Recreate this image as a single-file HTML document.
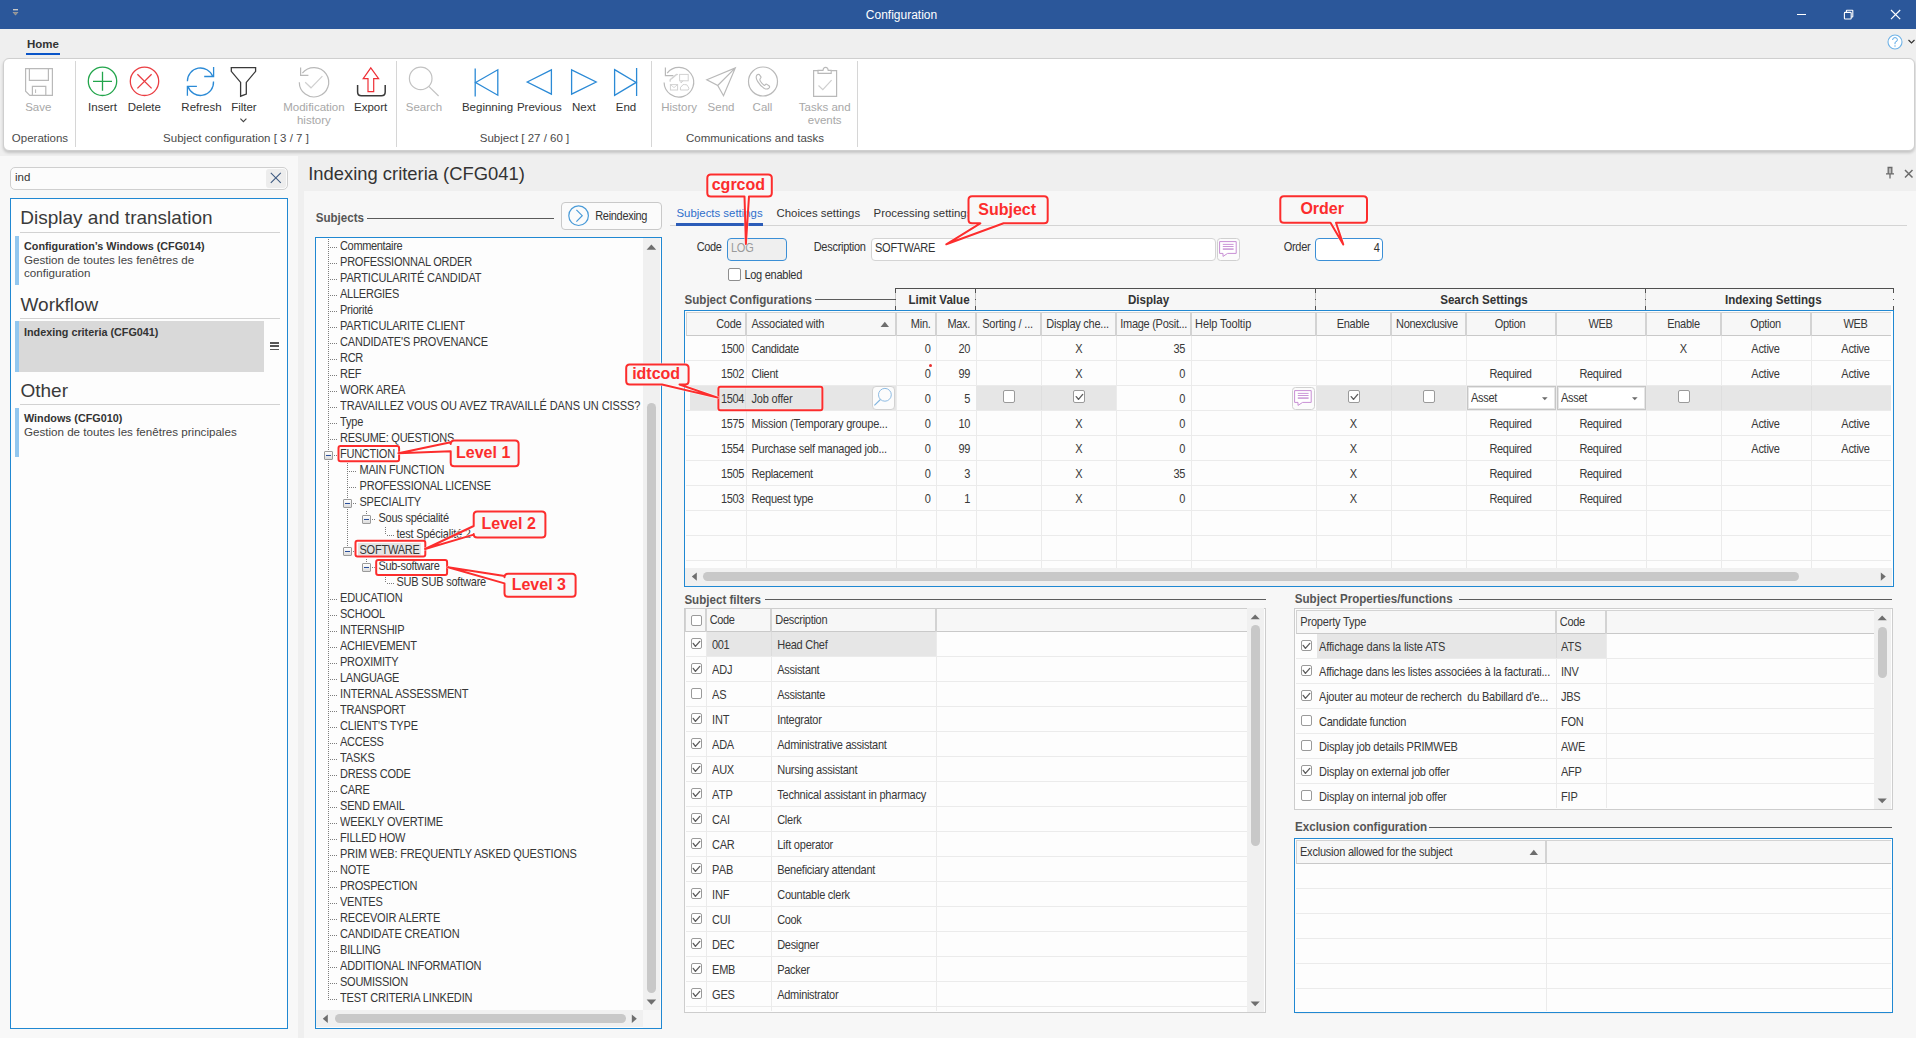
<!DOCTYPE html>
<html><head><meta charset="utf-8"><title>Configuration</title>
<style>
html,body{margin:0;padding:0;}
body{width:1916px;height:1038px;overflow:hidden;position:relative;background:#efefef;font-family:"Liberation Sans",sans-serif;}
.t{position:absolute;white-space:pre;}
.r{position:absolute;box-sizing:border-box;}
svg.r{overflow:visible;}
</style></head><body>
<div class="r" style="left:0px;top:0px;width:1916px;height:29px;background:#2b579a;"></div>
<div class="t" style="left:401.5px;width:1000px;text-align:center;top:8.54px;font-size:12px;line-height:12px;color:#ffffff;">Configuration</div>
<svg class="r" style="left:12px;top:8px;" width="8" height="10" viewBox="0 0 8 10"><rect x="1" y="1" width="5" height="1.4" fill="#c8c8c8"/><path d="M0.5 4 L6.5 4 L3.5 7.5 Z" fill="#a8a8a8"/><path d="M1.5 4.6 L5.5 4.6 L3.5 6.8 Z" fill="#8a8a8a"/></svg>
<div class="r" style="left:1797px;top:14px;width:9px;height:1px;background:#fff;"></div>
<svg class="r" style="left:1843px;top:9px;" width="12" height="12" viewBox="0 0 12 12"><rect x="1.4" y="3.4" width="6.8" height="6.6" rx="0.8" fill="none" stroke="#fff" stroke-width="1.1"/><path d="M3.4 3.4 V1.6 Q3.4 1.2 3.8 1.2 H9.4 Q9.8 1.2 9.8 1.6 V7.6 Q9.8 8 9.4 8 H8.2" fill="none" stroke="#fff" stroke-width="1.1"/></svg>
<svg class="r" style="left:1890px;top:9px;" width="12" height="12" viewBox="0 0 12 12"><path d="M1 1 L10.2 10.2 M10.2 1 L1 10.2" stroke="#fff" stroke-width="1.2"/></svg>
<div class="r" style="left:0px;top:29px;width:1916px;height:129px;background:#efefef;"></div>
<div class="t" style="left:27px;top:38.57px;font-size:11.5px;line-height:11.5px;color:#333;font-weight:600;">Home</div>
<div class="r" style="left:26px;top:53px;width:34px;height:2px;background:#0a55c8;"></div>
<svg class="r" style="left:1887px;top:34px;" width="16" height="16" viewBox="0 0 16 16"><circle cx="8" cy="8" r="7" fill="#fff" stroke="#6fb2e6" stroke-width="1.1"/><path d="M5.6 6 Q5.6 3.6 8 3.6 Q10.4 3.6 10.4 5.8 Q10.4 7.4 8 8.4 V10.2" fill="none" stroke="#5aa8e6" stroke-width="1"/><circle cx="8" cy="12" r="0.7" fill="#5aa8e6"/></svg>
<svg class="r" style="left:1908px;top:39px;" width="8" height="6" viewBox="0 0 8 6"><path d="M0.5 1 L3.5 4 L6.5 1" fill="none" stroke="#333" stroke-width="1.2"/></svg>
<div class="r" style="left:3px;top:58px;width:1912px;height:93px;background:#fff;border:1px solid #cfcfcf;border-radius:6px;box-sizing:border-box;box-shadow:0 2px 3px rgba(0,0,0,0.18);"></div>
<div class="t" style="left:-461.7px;width:1000px;text-align:center;top:101.87px;font-size:11.5px;line-height:11.5px;color:#a8a8a8;">Save</div>
<div class="t" style="left:-397.5px;width:1000px;text-align:center;top:101.87px;font-size:11.5px;line-height:11.5px;color:#333333;">Insert</div>
<div class="t" style="left:-355.7px;width:1000px;text-align:center;top:101.87px;font-size:11.5px;line-height:11.5px;color:#333333;">Delete</div>
<div class="t" style="left:-298.5px;width:1000px;text-align:center;top:101.87px;font-size:11.5px;line-height:11.5px;color:#333333;">Refresh</div>
<div class="t" style="left:-256.1px;width:1000px;text-align:center;top:101.87px;font-size:11.5px;line-height:11.5px;color:#333333;">Filter</div>
<div class="t" style="left:-186.10000000000002px;width:1000px;text-align:center;top:101.87px;font-size:11.5px;line-height:11.5px;color:#a8a8a8;">Modification</div>
<div class="t" style="left:-129.39999999999998px;width:1000px;text-align:center;top:101.87px;font-size:11.5px;line-height:11.5px;color:#333333;">Export</div>
<div class="t" style="left:-76px;width:1000px;text-align:center;top:101.87px;font-size:11.5px;line-height:11.5px;color:#a8a8a8;">Search</div>
<div class="t" style="left:-12.5px;width:1000px;text-align:center;top:101.87px;font-size:11.5px;line-height:11.5px;color:#333333;">Beginning</div>
<div class="t" style="left:39.299999999999955px;width:1000px;text-align:center;top:101.87px;font-size:11.5px;line-height:11.5px;color:#333333;">Previous</div>
<div class="t" style="left:83.79999999999995px;width:1000px;text-align:center;top:101.87px;font-size:11.5px;line-height:11.5px;color:#333333;">Next</div>
<div class="t" style="left:126px;width:1000px;text-align:center;top:101.87px;font-size:11.5px;line-height:11.5px;color:#333333;">End</div>
<div class="t" style="left:179.10000000000002px;width:1000px;text-align:center;top:101.87px;font-size:11.5px;line-height:11.5px;color:#a8a8a8;">History</div>
<div class="t" style="left:221px;width:1000px;text-align:center;top:101.87px;font-size:11.5px;line-height:11.5px;color:#a8a8a8;">Send</div>
<div class="t" style="left:262.5px;width:1000px;text-align:center;top:101.87px;font-size:11.5px;line-height:11.5px;color:#a8a8a8;">Call</div>
<div class="t" style="left:324.70000000000005px;width:1000px;text-align:center;top:101.87px;font-size:11.5px;line-height:11.5px;color:#a8a8a8;">Tasks and</div>
<div class="t" style="left:-186.10000000000002px;width:1000px;text-align:center;top:114.77px;font-size:11.5px;line-height:11.5px;color:#a8a8a8;">history</div>
<div class="t" style="left:324.70000000000005px;width:1000px;text-align:center;top:114.77px;font-size:11.5px;line-height:11.5px;color:#a8a8a8;">events</div>
<div class="t" style="left:-460px;width:1000px;text-align:center;top:133.07px;font-size:11.5px;line-height:11.5px;color:#4a4a4a;">Operations</div>
<div class="t" style="left:-264px;width:1000px;text-align:center;top:133.07px;font-size:11.5px;line-height:11.5px;color:#4a4a4a;">Subject configuration [ 3 / 7 ]</div>
<div class="t" style="left:24.5px;width:1000px;text-align:center;top:133.07px;font-size:11.5px;line-height:11.5px;color:#4a4a4a;">Subject [ 27 / 60 ]</div>
<div class="t" style="left:255px;width:1000px;text-align:center;top:133.07px;font-size:11.5px;line-height:11.5px;color:#4a4a4a;">Communications and tasks</div>
<div class="r" style="left:75px;top:61px;width:1px;height:86px;background:#d6d6d6;"></div>
<div class="r" style="left:396px;top:61px;width:1px;height:86px;background:#d6d6d6;"></div>
<div class="r" style="left:651px;top:61px;width:1px;height:86px;background:#d6d6d6;"></div>
<div class="r" style="left:857px;top:61px;width:1px;height:86px;background:#d6d6d6;"></div>
<svg class="r" style="left:0px;top:0px;pointer-events:none;" width="900" height="160" viewBox="0 0 900 160"><path d="M25.6 68.6 H52.4 V95.4 H29.8 L25.6 91.2 Z" fill="none" stroke="#b9b9b9" stroke-width="1.2"/><path d="M29.4 68.6 V80.4 H48.4 V68.6" fill="none" stroke="#b9b9b9" stroke-width="1.2"/><path d="M32.4 95.4 V86.4 H45.8 V95.4" fill="none" stroke="#b9b9b9" stroke-width="1.2"/><path d="M35.6 89.4 V93" stroke="#b9b9b9" stroke-width="1"/><circle cx="102.5" cy="81.3" r="14.2" fill="none" stroke="#22a54b" stroke-width="1.3"/><path d="M93 81.3 H112 M102.5 71.8 V90.8" stroke="#22a54b" stroke-width="1.3"/><circle cx="144.5" cy="81.3" r="14.2" fill="none" stroke="#ea3d42" stroke-width="1.3"/><path d="M137.4 74.2 L151.6 88.4 M151.6 74.2 L137.4 88.4" stroke="#ea3d42" stroke-width="1.3"/><path d="M187.4 81.3 A13.1 13.1 0 0 1 212.8 76.6" fill="none" stroke="#2b8ad6" stroke-width="1.3"/><path d="M213.6 67.1 V76.5 H204.2" fill="none" stroke="#2b8ad6" stroke-width="1.3"/><path d="M213.5 81.5 A13.1 13.1 0 0 1 188 86.5" fill="none" stroke="#2b8ad6" stroke-width="1.3"/><path d="M187.4 95.7 V86.4 H196.9" fill="none" stroke="#2b8ad6" stroke-width="1.3"/><path d="M231.3 67.6 H255.6 V71.3 L246.3 82.4 V94 L240.6 96.2 V82.4 L231.3 71.3 Z" fill="none" stroke="#3a3a3a" stroke-width="1.3" stroke-linejoin="miter"/><path d="M240.4 118.6 L243.4 121.6 L246.4 118.6" fill="none" stroke="#444" stroke-width="1.1"/><path d="M299.3 82.2 A14.7 14.7 0 1 0 302.4 73.2" fill="none" stroke="#b9b9b9" stroke-width="1.2"/><path d="M300.6 67.6 V75.4 H308.4" fill="none" stroke="#b9b9b9" stroke-width="1.2"/><path d="M305.2 82.2 L311 87.8 L322.4 76.2" fill="none" stroke="#cfcfcf" stroke-width="1.2"/><path d="M370.8 67.9 L378.6 78.7 H373.7 V91.6 H368 V78.7 H363.2 Z" fill="none" stroke="#ee2f36" stroke-width="1.2" stroke-linejoin="miter"/><path d="M357.6 85 V92 Q357.6 95.8 361.4 95.8 H381.4 Q385.2 95.8 385.2 92 V85" fill="none" stroke="#3a3a3a" stroke-width="1.5"/><circle cx="420.7" cy="78.4" r="11.3" fill="none" stroke="#c2c2c2" stroke-width="1.2"/><path d="M428.8 86.4 L438.6 96" stroke="#c2c2c2" stroke-width="1.2"/><path d="M475.2 68.6 V96.4" stroke="#2b8ad6" stroke-width="1.3"/><path d="M475.6 82.5 L497.8 69.8 V95.2 Z" fill="none" stroke="#2b8ad6" stroke-width="1.3"/><path d="M527.2 82 L551.4 69.8 V94.2 Z" fill="none" stroke="#2b8ad6" stroke-width="1.3"/><path d="M571.6 69.8 L596.2 82 L571.6 94.2 Z" fill="none" stroke="#2b8ad6" stroke-width="1.3"/><path d="M614.6 69.6 L636.2 82.4 L614.6 95.4 Z" fill="none" stroke="#2b8ad6" stroke-width="1.3"/><path d="M636.6 68 V96" stroke="#2b8ad6" stroke-width="1.3"/><path d="M664.1 82.6 A14.8 14.8 0 1 0 667.2 73.2" fill="none" stroke="#b9b9b9" stroke-width="1.2"/><path d="M665.4 67.4 V75.6 H673.4" fill="none" stroke="#b9b9b9" stroke-width="1.2"/><rect x="679.6" y="74.4" width="8.6" height="6.4" fill="none" stroke="#d2d2d2" stroke-width="1"/><path d="M681 80.8 V83 L683 80.8" fill="none" stroke="#d2d2d2" stroke-width="1"/><path d="M670.4 81.6 Q669.4 79.6 671.6 78.6 L675.4 75.4 Q677 73.8 677.6 75" fill="none" stroke="#d2d2d2" stroke-width="1.4"/><rect x="670.4" y="84.6" width="7.2" height="5.4" fill="none" stroke="#d2d2d2" stroke-width="1"/><path d="M670.4 84.6 L674 87.6 L677.6 84.6" fill="none" stroke="#d2d2d2" stroke-width="0.9"/><path d="M680.4 90 H688.2 Q689.8 88.2 688 86.6 Q687.4 84 684.6 84.6 Q682.8 83.8 682 86 Q679.8 86.4 680.4 90 Z" fill="none" stroke="#d2d2d2" stroke-width="1"/><path d="M706.8 79.7 L735.3 67.9 L723.5 95.7 L717.7 85.5 Z M717.7 85.5 L735.3 67.9" fill="none" stroke="#b9b9b9" stroke-width="1.2" stroke-linejoin="miter"/><circle cx="763" cy="81.5" r="14.5" fill="none" stroke="#b9b9b9" stroke-width="1.2"/><path d="M756.6 75.4 Q755.4 77.6 757.6 81.4 Q760.6 86.4 764.4 88.4 Q767 89.6 768.8 88.2 Q770.2 87 769.2 86 L767 84.4 Q766 83.8 765.2 84.8 L764.6 85.4 Q762.4 84.4 760.4 81.2 Q759.4 79.2 760.4 78.4 Q761.4 77.6 760.8 76.6 L759.4 74.6 Q758 73.8 756.6 75.4 Z" fill="none" stroke="#b9b9b9" stroke-width="1.1"/><path d="M818 70.6 H813.6 V96.4 H836.6 V70.6 H831.2" fill="none" stroke="#b9b9b9" stroke-width="1.2"/><path d="M818 70.4 V73.4 H831.2 V70.4 H828.2 Q828 67.4 825.6 67.4 Q823.2 67.4 823 70.4 Z" fill="none" stroke="#b9b9b9" stroke-width="1.1"/><path d="M818.5 85.5 L822.8 89.6 L831.6 80.1" fill="none" stroke="#cfcfcf" stroke-width="1.2"/></svg>
<div class="r" style="left:0px;top:156px;width:298px;height:882px;background:#f8f8f8;"></div>
<div class="r" style="left:10px;top:167px;width:278px;height:23px;background:#fcfcfc;border:1px solid #cfcfcf;border-radius:5px;"></div>
<div class="t" style="left:15px;top:171.97px;font-size:11.5px;line-height:11.5px;color:#333;">ind</div>
<div class="r" style="left:266px;top:169px;width:20px;height:19px;background:#ededed;border-radius:3px;"></div>
<svg class="r" style="left:270px;top:172px;" width="12" height="12" viewBox="0 0 12 12"><path d="M0.8 0.8 L10.8 10.8 M10.8 0.8 L0.8 10.8" stroke="#3f5b82" stroke-width="1.1"/></svg>
<div class="r" style="left:10px;top:198px;width:278px;height:831px;background:#fdfdfd;border:1px solid #2088d2;"></div>
<div class="t" style="left:20.3px;top:208.42px;font-size:19px;line-height:19px;color:#3a3a3a;">Display and translation</div>
<div class="r" style="left:20px;top:232px;width:260px;height:1px;background:#d2d2d2;"></div>
<div class="r" style="left:15px;top:236px;width:4px;height:49px;background:#93c7ef;"></div>
<div class="t" style="left:24px;top:241.36px;font-size:10.8px;line-height:10.8px;color:#333;font-weight:700;">Configuration’s Windows (CFG014)</div>
<div class="t" style="left:24px;top:254.08px;font-size:11.6px;line-height:11.6px;color:#444;">Gestion de toutes les fenêtres de</div>
<div class="t" style="left:24px;top:266.88px;font-size:11.6px;line-height:11.6px;color:#444;">configuration</div>
<div class="t" style="left:20.5px;top:294.52px;font-size:19px;line-height:19px;color:#3a3a3a;">Workflow</div>
<div class="r" style="left:20px;top:318px;width:260px;height:1px;background:#d2d2d2;"></div>
<div class="r" style="left:15px;top:321px;width:249px;height:51px;background:#d9d9d9;"></div>
<div class="r" style="left:15px;top:321px;width:4px;height:51px;background:#93c7ef;"></div>
<div class="t" style="left:24px;top:327.46px;font-size:10.8px;line-height:10.8px;color:#333;font-weight:700;">Indexing criteria (CFG041)</div>
<div class="r" style="left:270px;top:342px;width:9px;height:1.6px;background:#555;"></div>
<div class="r" style="left:270px;top:345.4px;width:9px;height:1.6px;background:#555;"></div>
<div class="r" style="left:270px;top:348.8px;width:9px;height:1.6px;background:#555;"></div>
<div class="t" style="left:20.5px;top:380.52px;font-size:19px;line-height:19px;color:#3a3a3a;">Other</div>
<div class="r" style="left:20px;top:404px;width:260px;height:1px;background:#d2d2d2;"></div>
<div class="r" style="left:15px;top:408px;width:4px;height:49px;background:#93c7ef;"></div>
<div class="t" style="left:24px;top:413.46px;font-size:10.8px;line-height:10.8px;color:#333;font-weight:700;">Windows (CFG010)</div>
<div class="t" style="left:24px;top:425.78px;font-size:11.6px;line-height:11.6px;color:#444;">Gestion de toutes les fenêtres principales</div>
<div class="t" style="left:308.2px;top:164.72px;font-size:18.4px;line-height:18.4px;color:#333;">Indexing criteria (CFG041)</div>
<svg class="r" style="left:1884px;top:166px;" width="12" height="14" viewBox="0 0 12 14"><path d="M3.5 1.5 H8.5 M4.2 1.5 V7.5 M7.8 1.5 V7.5 M2 7.8 H10 M6 7.8 V12.5" stroke="#6b6b6b" stroke-width="1.3" fill="none"/><rect x="4.2" y="1.5" width="3.6" height="6.3" fill="#6b6b6b" opacity="0.4"/></svg>
<svg class="r" style="left:1904px;top:169px;" width="10" height="10" viewBox="0 0 10 10"><path d="M1 1 L8.5 8.5 M8.5 1 L1 8.5" stroke="#6b6b6b" stroke-width="1.5"/></svg>
<div class="r" style="left:304px;top:191px;width:1612px;height:847px;background:#f7f7f7;"></div>
<div class="t" style="left:315.7px;top:212.18px;font-size:11.6px;line-height:11.6px;color:#555;font-weight:700;transform:scaleY(1.125);transform-origin:0 9.82px;">Subjects</div>
<div class="r" style="left:367px;top:218px;width:187px;height:1px;background:#5a5a5a;"></div>
<div class="r" style="left:561px;top:202px;width:101px;height:28px;background:#fbfbfb;border:1px solid #c9c9c9;border-radius:4px;"></div>
<svg class="r" style="left:567px;top:204px;" width="24" height="24" viewBox="0 0 24 24"><circle cx="11.6" cy="11.7" r="9.8" fill="none" stroke="#4a9bd8" stroke-width="1.2"/><path d="M9.4 5.8 L15.2 11.7 L9.4 17.6" fill="none" stroke="#4a9bd8" stroke-width="1.2"/></svg>
<div class="t" style="left:595.2px;top:210.99px;font-size:11px;line-height:11px;color:#333;letter-spacing:-0.306px;transform:scaleY(1.125);transform-origin:0 9.31px;">Reindexing</div>
<div class="r" style="left:315px;top:237px;width:347px;height:792px;background:#fdfdfd;border:1px solid #2088d2;"></div>
<div class="r" style="left:643px;top:238px;width:17px;height:772px;background:#f0f0f0;"></div>
<svg class="r" style="left:646px;top:244px;" width="11" height="7" viewBox="0 0 11 7"><path d="M0.6 5.8 L5.4 0.6 L10.2 5.8 Z" fill="#6e6e6e"/></svg>
<div class="r" style="left:647px;top:403px;width:9px;height:590px;background:#c8c8c8;border-radius:4.5px;"></div>
<svg class="r" style="left:646px;top:999px;" width="11" height="7" viewBox="0 0 11 7"><path d="M0.6 0.6 L5.4 5.8 L10.2 0.6 Z" fill="#6e6e6e"/></svg>
<div class="r" style="left:316px;top:1010px;width:327px;height:17px;background:#f0f0f0;"></div>
<div class="r" style="left:643px;top:1010px;width:18px;height:18px;background:#f7f7f7;"></div>
<svg class="r" style="left:322px;top:1014px;" width="7" height="10" viewBox="0 0 7 10"><path d="M5.8 0.4 L0.8 4.7 L5.8 9 Z" fill="#6e6e6e"/></svg>
<div class="r" style="left:335px;top:1014px;width:291px;height:9px;background:#c8c8c8;border-radius:4.5px;"></div>
<svg class="r" style="left:631px;top:1014px;" width="7" height="10" viewBox="0 0 7 10"><path d="M0.8 0.4 L5.8 4.7 L0.8 9 Z" fill="#6e6e6e"/></svg>
<div class="r" style="left:328px;top:239px;width:1px;height:761px;background:repeating-linear-gradient(to bottom,#7c7c7c 0 1px,transparent 1px 2px);"></div>
<div class="r" style="left:347px;top:461px;width:1px;height:86px;background:repeating-linear-gradient(to bottom,#7c7c7c 0 1px,transparent 1px 2px);"></div>
<div class="r" style="left:330px;top:247px;width:8px;height:1px;background:repeating-linear-gradient(to right,#7c7c7c 0 1px,transparent 1px 2px);"></div>
<div class="t" style="left:340px;top:241.19px;font-size:11px;line-height:11px;color:#363636;letter-spacing:-0.337px;transform:scaleY(1.125);transform-origin:0 9.31px;">Commentaire</div>
<div class="r" style="left:330px;top:263px;width:8px;height:1px;background:repeating-linear-gradient(to right,#7c7c7c 0 1px,transparent 1px 2px);"></div>
<div class="t" style="left:340px;top:257.19px;font-size:11px;line-height:11px;color:#363636;letter-spacing:-0.208px;transform:scaleY(1.125);transform-origin:0 9.31px;">PROFESSIONNAL ORDER</div>
<div class="r" style="left:330px;top:279px;width:8px;height:1px;background:repeating-linear-gradient(to right,#7c7c7c 0 1px,transparent 1px 2px);"></div>
<div class="t" style="left:340px;top:273.19px;font-size:11px;line-height:11px;color:#363636;letter-spacing:-0.13px;transform:scaleY(1.125);transform-origin:0 9.31px;">PARTICULARITÉ CANDIDAT</div>
<div class="r" style="left:330px;top:295px;width:8px;height:1px;background:repeating-linear-gradient(to right,#7c7c7c 0 1px,transparent 1px 2px);"></div>
<div class="t" style="left:340px;top:289.19px;font-size:11px;line-height:11px;color:#363636;letter-spacing:-0.238px;transform:scaleY(1.125);transform-origin:0 9.31px;">ALLERGIES</div>
<div class="r" style="left:330px;top:311px;width:8px;height:1px;background:repeating-linear-gradient(to right,#7c7c7c 0 1px,transparent 1px 2px);"></div>
<div class="t" style="left:340px;top:305.19px;font-size:11px;line-height:11px;color:#363636;letter-spacing:-0.235px;transform:scaleY(1.125);transform-origin:0 9.31px;">Priorité</div>
<div class="r" style="left:330px;top:327px;width:8px;height:1px;background:repeating-linear-gradient(to right,#7c7c7c 0 1px,transparent 1px 2px);"></div>
<div class="t" style="left:340px;top:321.19px;font-size:11px;line-height:11px;color:#363636;letter-spacing:-0.154px;transform:scaleY(1.125);transform-origin:0 9.31px;">PARTICULARITE CLIENT</div>
<div class="r" style="left:330px;top:343px;width:8px;height:1px;background:repeating-linear-gradient(to right,#7c7c7c 0 1px,transparent 1px 2px);"></div>
<div class="t" style="left:340px;top:337.19px;font-size:11px;line-height:11px;color:#363636;letter-spacing:-0.194px;transform:scaleY(1.125);transform-origin:0 9.31px;">CANDIDATE'S PROVENANCE</div>
<div class="r" style="left:330px;top:359px;width:8px;height:1px;background:repeating-linear-gradient(to right,#7c7c7c 0 1px,transparent 1px 2px);"></div>
<div class="t" style="left:340px;top:353.19px;font-size:11px;line-height:11px;color:#363636;letter-spacing:-0.278px;transform:scaleY(1.125);transform-origin:0 9.31px;">RCR</div>
<div class="r" style="left:330px;top:375px;width:8px;height:1px;background:repeating-linear-gradient(to right,#7c7c7c 0 1px,transparent 1px 2px);"></div>
<div class="t" style="left:340px;top:369.19px;font-size:11px;line-height:11px;color:#363636;letter-spacing:-0.257px;transform:scaleY(1.125);transform-origin:0 9.31px;">REF</div>
<div class="r" style="left:330px;top:391px;width:8px;height:1px;background:repeating-linear-gradient(to right,#7c7c7c 0 1px,transparent 1px 2px);"></div>
<div class="t" style="left:340px;top:385.19px;font-size:11px;line-height:11px;color:#363636;letter-spacing:-0.148px;transform:scaleY(1.125);transform-origin:0 9.31px;">WORK AREA</div>
<div class="r" style="left:330px;top:407px;width:8px;height:1px;background:repeating-linear-gradient(to right,#7c7c7c 0 1px,transparent 1px 2px);"></div>
<div class="t" style="left:340px;top:401.19px;font-size:11px;line-height:11px;color:#363636;letter-spacing:-0.071px;transform:scaleY(1.125);transform-origin:0 9.31px;">TRAVAILLEZ VOUS OU AVEZ TRAVAILLÉ DANS UN CISSS?</div>
<div class="r" style="left:330px;top:423px;width:8px;height:1px;background:repeating-linear-gradient(to right,#7c7c7c 0 1px,transparent 1px 2px);"></div>
<div class="t" style="left:340px;top:417.19px;font-size:11px;line-height:11px;color:#363636;letter-spacing:-0.169px;transform:scaleY(1.125);transform-origin:0 9.31px;">Type</div>
<div class="r" style="left:330px;top:439px;width:8px;height:1px;background:repeating-linear-gradient(to right,#7c7c7c 0 1px,transparent 1px 2px);"></div>
<div class="t" style="left:340px;top:433.19px;font-size:11px;line-height:11px;color:#363636;letter-spacing:-0.23px;transform:scaleY(1.125);transform-origin:0 9.31px;">RESUME: QUESTIONS</div>
<div class="r" style="left:324px;top:451px;width:9px;height:9px;border:1px solid #9a9a9a;border-radius:1px;background:linear-gradient(#ffffff,#dcdcdc);"></div>
<div class="r" style="left:326px;top:455px;width:5px;height:1px;background:#2a4f9a;"></div>
<div class="r" style="left:334px;top:455px;width:4px;height:1px;background:repeating-linear-gradient(to right,#7c7c7c 0 1px,transparent 1px 2px);"></div>
<div class="t" style="left:340px;top:449.19px;font-size:11px;line-height:11px;color:#363636;letter-spacing:-0.249px;transform:scaleY(1.125);transform-origin:0 9.31px;">FUNCTION</div>
<div class="r" style="left:349px;top:471px;width:8px;height:1px;background:repeating-linear-gradient(to right,#7c7c7c 0 1px,transparent 1px 2px);"></div>
<div class="t" style="left:359.5px;top:465.19px;font-size:11px;line-height:11px;color:#363636;letter-spacing:-0.204px;transform:scaleY(1.125);transform-origin:0 9.31px;">MAIN FUNCTION</div>
<div class="r" style="left:349px;top:487px;width:8px;height:1px;background:repeating-linear-gradient(to right,#7c7c7c 0 1px,transparent 1px 2px);"></div>
<div class="t" style="left:359.5px;top:481.19px;font-size:11px;line-height:11px;color:#363636;letter-spacing:-0.196px;transform:scaleY(1.125);transform-origin:0 9.31px;">PROFESSIONAL LICENSE</div>
<div class="r" style="left:343px;top:499px;width:9px;height:9px;border:1px solid #9a9a9a;border-radius:1px;background:linear-gradient(#ffffff,#dcdcdc);"></div>
<div class="r" style="left:345px;top:503px;width:5px;height:1px;background:#2a4f9a;"></div>
<div class="r" style="left:353px;top:503px;width:4px;height:1px;background:repeating-linear-gradient(to right,#7c7c7c 0 1px,transparent 1px 2px);"></div>
<div class="t" style="left:359.5px;top:497.19px;font-size:11px;line-height:11px;color:#363636;letter-spacing:-0.223px;transform:scaleY(1.125);transform-origin:0 9.31px;">SPECIALITY</div>
<div class="r" style="left:366px;top:511px;width:1px;height:4px;background:repeating-linear-gradient(to bottom,#7c7c7c 0 1px,transparent 1px 2px);"></div>
<div class="r" style="left:362px;top:515px;width:9px;height:9px;border:1px solid #9a9a9a;border-radius:1px;background:linear-gradient(#ffffff,#dcdcdc);"></div>
<div class="r" style="left:364px;top:519px;width:5px;height:1px;background:#2a4f9a;"></div>
<div class="r" style="left:372px;top:519px;width:4px;height:1px;background:repeating-linear-gradient(to right,#7c7c7c 0 1px,transparent 1px 2px);"></div>
<div class="t" style="left:378.5px;top:513.19px;font-size:11px;line-height:11px;color:#363636;letter-spacing:-0.247px;transform:scaleY(1.125);transform-origin:0 9.31px;">Sous spécialité</div>
<div class="r" style="left:385px;top:527px;width:1px;height:8px;background:repeating-linear-gradient(to bottom,#7c7c7c 0 1px,transparent 1px 2px);"></div>
<div class="r" style="left:387px;top:535px;width:7px;height:1px;background:repeating-linear-gradient(to right,#7c7c7c 0 1px,transparent 1px 2px);"></div>
<div class="t" style="left:396.5px;top:529.19px;font-size:11px;line-height:11px;color:#363636;letter-spacing:-0.202px;transform:scaleY(1.125);transform-origin:0 9.31px;">test Spécialité 2</div>
<div class="r" style="left:343px;top:547px;width:9px;height:9px;border:1px solid #9a9a9a;border-radius:1px;background:linear-gradient(#ffffff,#dcdcdc);"></div>
<div class="r" style="left:345px;top:551px;width:5px;height:1px;background:#2a4f9a;"></div>
<div class="r" style="left:353px;top:551px;width:4px;height:1px;background:repeating-linear-gradient(to right,#7c7c7c 0 1px,transparent 1px 2px);"></div>
<div class="r" style="left:358px;top:543px;width:63px;height:13px;background:#e4e4e4;"></div>
<div class="t" style="left:359.5px;top:545.19px;font-size:11px;line-height:11px;color:#363636;letter-spacing:-0.222px;transform:scaleY(1.125);transform-origin:0 9.31px;">SOFTWARE</div>
<div class="r" style="left:366px;top:559px;width:1px;height:4px;background:repeating-linear-gradient(to bottom,#7c7c7c 0 1px,transparent 1px 2px);"></div>
<div class="r" style="left:362px;top:563px;width:9px;height:9px;border:1px solid #9a9a9a;border-radius:1px;background:linear-gradient(#ffffff,#dcdcdc);"></div>
<div class="r" style="left:364px;top:567px;width:5px;height:1px;background:#2a4f9a;"></div>
<div class="r" style="left:372px;top:567px;width:4px;height:1px;background:repeating-linear-gradient(to right,#7c7c7c 0 1px,transparent 1px 2px);"></div>
<div class="t" style="left:378.5px;top:561.19px;font-size:11px;line-height:11px;color:#363636;letter-spacing:-0.316px;transform:scaleY(1.125);transform-origin:0 9.31px;">Sub-software</div>
<div class="r" style="left:385px;top:575px;width:1px;height:8px;background:repeating-linear-gradient(to bottom,#7c7c7c 0 1px,transparent 1px 2px);"></div>
<div class="r" style="left:387px;top:583px;width:7px;height:1px;background:repeating-linear-gradient(to right,#7c7c7c 0 1px,transparent 1px 2px);"></div>
<div class="t" style="left:396.5px;top:577.19px;font-size:11px;line-height:11px;color:#363636;letter-spacing:-0.214px;transform:scaleY(1.125);transform-origin:0 9.31px;">SUB SUB software</div>
<div class="r" style="left:330px;top:599px;width:8px;height:1px;background:repeating-linear-gradient(to right,#7c7c7c 0 1px,transparent 1px 2px);"></div>
<div class="t" style="left:340px;top:593.19px;font-size:11px;line-height:11px;color:#363636;letter-spacing:-0.161px;transform:scaleY(1.125);transform-origin:0 9.31px;">EDUCATION</div>
<div class="r" style="left:330px;top:615px;width:8px;height:1px;background:repeating-linear-gradient(to right,#7c7c7c 0 1px,transparent 1px 2px);"></div>
<div class="t" style="left:340px;top:609.19px;font-size:11px;line-height:11px;color:#363636;letter-spacing:-0.271px;transform:scaleY(1.125);transform-origin:0 9.31px;">SCHOOL</div>
<div class="r" style="left:330px;top:631px;width:8px;height:1px;background:repeating-linear-gradient(to right,#7c7c7c 0 1px,transparent 1px 2px);"></div>
<div class="t" style="left:340px;top:625.19px;font-size:11px;line-height:11px;color:#363636;letter-spacing:-0.233px;transform:scaleY(1.125);transform-origin:0 9.31px;">INTERNSHIP</div>
<div class="r" style="left:330px;top:647px;width:8px;height:1px;background:repeating-linear-gradient(to right,#7c7c7c 0 1px,transparent 1px 2px);"></div>
<div class="t" style="left:340px;top:641.19px;font-size:11px;line-height:11px;color:#363636;letter-spacing:-0.253px;transform:scaleY(1.125);transform-origin:0 9.31px;">ACHIEVEMENT</div>
<div class="r" style="left:330px;top:663px;width:8px;height:1px;background:repeating-linear-gradient(to right,#7c7c7c 0 1px,transparent 1px 2px);"></div>
<div class="t" style="left:340px;top:657.19px;font-size:11px;line-height:11px;color:#363636;letter-spacing:-0.235px;transform:scaleY(1.125);transform-origin:0 9.31px;">PROXIMITY</div>
<div class="r" style="left:330px;top:679px;width:8px;height:1px;background:repeating-linear-gradient(to right,#7c7c7c 0 1px,transparent 1px 2px);"></div>
<div class="t" style="left:340px;top:673.19px;font-size:11px;line-height:11px;color:#363636;letter-spacing:-0.267px;transform:scaleY(1.125);transform-origin:0 9.31px;">LANGUAGE</div>
<div class="r" style="left:330px;top:695px;width:8px;height:1px;background:repeating-linear-gradient(to right,#7c7c7c 0 1px,transparent 1px 2px);"></div>
<div class="t" style="left:340px;top:689.19px;font-size:11px;line-height:11px;color:#363636;letter-spacing:-0.169px;transform:scaleY(1.125);transform-origin:0 9.31px;">INTERNAL ASSESSMENT</div>
<div class="r" style="left:330px;top:711px;width:8px;height:1px;background:repeating-linear-gradient(to right,#7c7c7c 0 1px,transparent 1px 2px);"></div>
<div class="t" style="left:340px;top:705.19px;font-size:11px;line-height:11px;color:#363636;letter-spacing:-0.242px;transform:scaleY(1.125);transform-origin:0 9.31px;">TRANSPORT</div>
<div class="r" style="left:330px;top:727px;width:8px;height:1px;background:repeating-linear-gradient(to right,#7c7c7c 0 1px,transparent 1px 2px);"></div>
<div class="t" style="left:340px;top:721.19px;font-size:11px;line-height:11px;color:#363636;letter-spacing:-0.18px;transform:scaleY(1.125);transform-origin:0 9.31px;">CLIENT'S TYPE</div>
<div class="r" style="left:330px;top:743px;width:8px;height:1px;background:repeating-linear-gradient(to right,#7c7c7c 0 1px,transparent 1px 2px);"></div>
<div class="t" style="left:340px;top:737.19px;font-size:11px;line-height:11px;color:#363636;letter-spacing:-0.264px;transform:scaleY(1.125);transform-origin:0 9.31px;">ACCESS</div>
<div class="r" style="left:330px;top:759px;width:8px;height:1px;background:repeating-linear-gradient(to right,#7c7c7c 0 1px,transparent 1px 2px);"></div>
<div class="t" style="left:340px;top:753.19px;font-size:11px;line-height:11px;color:#363636;letter-spacing:-0.089px;transform:scaleY(1.125);transform-origin:0 9.31px;">TASKS</div>
<div class="r" style="left:330px;top:775px;width:8px;height:1px;background:repeating-linear-gradient(to right,#7c7c7c 0 1px,transparent 1px 2px);"></div>
<div class="t" style="left:340px;top:769.19px;font-size:11px;line-height:11px;color:#363636;letter-spacing:-0.213px;transform:scaleY(1.125);transform-origin:0 9.31px;">DRESS CODE</div>
<div class="r" style="left:330px;top:791px;width:8px;height:1px;background:repeating-linear-gradient(to right,#7c7c7c 0 1px,transparent 1px 2px);"></div>
<div class="t" style="left:340px;top:785.19px;font-size:11px;line-height:11px;color:#363636;letter-spacing:-0.267px;transform:scaleY(1.125);transform-origin:0 9.31px;">CARE</div>
<div class="r" style="left:330px;top:807px;width:8px;height:1px;background:repeating-linear-gradient(to right,#7c7c7c 0 1px,transparent 1px 2px);"></div>
<div class="t" style="left:340px;top:801.19px;font-size:11px;line-height:11px;color:#363636;letter-spacing:-0.192px;transform:scaleY(1.125);transform-origin:0 9.31px;">SEND EMAIL</div>
<div class="r" style="left:330px;top:823px;width:8px;height:1px;background:repeating-linear-gradient(to right,#7c7c7c 0 1px,transparent 1px 2px);"></div>
<div class="t" style="left:340px;top:817.19px;font-size:11px;line-height:11px;color:#363636;letter-spacing:-0.14px;transform:scaleY(1.125);transform-origin:0 9.31px;">WEEKLY OVERTIME</div>
<div class="r" style="left:330px;top:839px;width:8px;height:1px;background:repeating-linear-gradient(to right,#7c7c7c 0 1px,transparent 1px 2px);"></div>
<div class="t" style="left:340px;top:833.19px;font-size:11px;line-height:11px;color:#363636;letter-spacing:-0.194px;transform:scaleY(1.125);transform-origin:0 9.31px;">FILLED HOW</div>
<div class="r" style="left:330px;top:855px;width:8px;height:1px;background:repeating-linear-gradient(to right,#7c7c7c 0 1px,transparent 1px 2px);"></div>
<div class="t" style="left:340px;top:849.19px;font-size:11px;line-height:11px;color:#363636;letter-spacing:-0.152px;transform:scaleY(1.125);transform-origin:0 9.31px;">PRIM WEB: FREQUENTLY ASKED QUESTIONS</div>
<div class="r" style="left:330px;top:871px;width:8px;height:1px;background:repeating-linear-gradient(to right,#7c7c7c 0 1px,transparent 1px 2px);"></div>
<div class="t" style="left:340px;top:865.19px;font-size:11px;line-height:11px;color:#363636;letter-spacing:-0.267px;transform:scaleY(1.125);transform-origin:0 9.31px;">NOTE</div>
<div class="r" style="left:330px;top:887px;width:8px;height:1px;background:repeating-linear-gradient(to right,#7c7c7c 0 1px,transparent 1px 2px);"></div>
<div class="t" style="left:340px;top:881.19px;font-size:11px;line-height:11px;color:#363636;letter-spacing:-0.255px;transform:scaleY(1.125);transform-origin:0 9.31px;">PROSPECTION</div>
<div class="r" style="left:330px;top:903px;width:8px;height:1px;background:repeating-linear-gradient(to right,#7c7c7c 0 1px,transparent 1px 2px);"></div>
<div class="t" style="left:340px;top:897.19px;font-size:11px;line-height:11px;color:#363636;letter-spacing:-0.257px;transform:scaleY(1.125);transform-origin:0 9.31px;">VENTES</div>
<div class="r" style="left:330px;top:919px;width:8px;height:1px;background:repeating-linear-gradient(to right,#7c7c7c 0 1px,transparent 1px 2px);"></div>
<div class="t" style="left:340px;top:913.19px;font-size:11px;line-height:11px;color:#363636;letter-spacing:-0.16px;transform:scaleY(1.125);transform-origin:0 9.31px;">RECEVOIR ALERTE</div>
<div class="r" style="left:330px;top:935px;width:8px;height:1px;background:repeating-linear-gradient(to right,#7c7c7c 0 1px,transparent 1px 2px);"></div>
<div class="t" style="left:340px;top:929.19px;font-size:11px;line-height:11px;color:#363636;letter-spacing:-0.126px;transform:scaleY(1.125);transform-origin:0 9.31px;">CANDIDATE CREATION</div>
<div class="r" style="left:330px;top:951px;width:8px;height:1px;background:repeating-linear-gradient(to right,#7c7c7c 0 1px,transparent 1px 2px);"></div>
<div class="t" style="left:340px;top:945.19px;font-size:11px;line-height:11px;color:#363636;letter-spacing:-0.211px;transform:scaleY(1.125);transform-origin:0 9.31px;">BILLING</div>
<div class="r" style="left:330px;top:967px;width:8px;height:1px;background:repeating-linear-gradient(to right,#7c7c7c 0 1px,transparent 1px 2px);"></div>
<div class="t" style="left:340px;top:961.19px;font-size:11px;line-height:11px;color:#363636;letter-spacing:-0.158px;transform:scaleY(1.125);transform-origin:0 9.31px;">ADDITIONAL INFORMATION</div>
<div class="r" style="left:330px;top:983px;width:8px;height:1px;background:repeating-linear-gradient(to right,#7c7c7c 0 1px,transparent 1px 2px);"></div>
<div class="t" style="left:340px;top:977.19px;font-size:11px;line-height:11px;color:#363636;letter-spacing:-0.246px;transform:scaleY(1.125);transform-origin:0 9.31px;">SOUMISSION</div>
<div class="r" style="left:330px;top:999px;width:8px;height:1px;background:repeating-linear-gradient(to right,#7c7c7c 0 1px,transparent 1px 2px);"></div>
<div class="t" style="left:340px;top:993.19px;font-size:11px;line-height:11px;color:#363636;letter-spacing:-0.143px;transform:scaleY(1.125);transform-origin:0 9.31px;">TEST CRITERIA LINKEDIN</div>
<div class="r" style="left:670px;top:225px;width:1237px;height:1px;background:#d4d4d4;"></div>
<div class="t" style="left:676.5px;top:208.15px;font-size:11.4px;line-height:11.4px;color:#2f6ecb;">Subjects settings</div>
<div class="r" style="left:676px;top:223px;width:87px;height:3px;background:#2b5cb8;"></div>
<div class="t" style="left:776.5px;top:208.15px;font-size:11.4px;line-height:11.4px;color:#333;">Choices settings</div>
<div class="t" style="left:873.6px;top:208.15px;font-size:11.4px;line-height:11.4px;color:#333;">Processing settings</div>
<div class="t" style="left:696.7px;top:242.49px;font-size:11px;line-height:11px;color:#333;letter-spacing:-0.34px;transform:scaleY(1.125);transform-origin:0 9.31px;">Code</div>
<div class="r" style="left:727px;top:238px;width:60px;height:23px;background:#efefef;border:1px solid #3b8fd6;border-radius:4px;"></div>
<div class="t" style="left:731px;top:242.89px;font-size:11px;line-height:11px;color:#9a9a9a;letter-spacing:-0.271px;transform:scaleY(1.125);transform-origin:0 9.31px;">LOG</div>
<div class="t" style="left:813.7px;top:242.49px;font-size:11px;line-height:11px;color:#333;letter-spacing:-0.278px;transform:scaleY(1.125);transform-origin:0 9.31px;">Description</div>
<div class="r" style="left:871px;top:238px;width:345px;height:23px;background:#fff;border:1px solid #d4d4d4;border-radius:4px;"></div>
<div class="t" style="left:875px;top:242.89px;font-size:11px;line-height:11px;color:#333;letter-spacing:-0.222px;transform:scaleY(1.125);transform-origin:0 9.31px;">SOFTWARE</div>
<div class="r" style="left:1217px;top:238px;width:23px;height:23px;background:#fcfcfc;border:1px solid #d0d0d0;border-radius:3.5px;"></div>
<svg class="r" style="left:1217px;top:238px;" width="23" height="23" viewBox="0 0 23 23"><path d="M2.6 3.6 H19.2 V15.4 H10.6 L6 18.4 L6 15.4 H2.6 Z" fill="#fff" stroke="#c88fd4" stroke-width="1"/><path d="M5.8 6.4 H16.6 M5.8 8.5 H16.6" stroke="#c58bd2" stroke-width="0.9"/><rect x="5.8" y="10.2" width="10.8" height="1.8" fill="#d2a8dc"/></svg>
<div class="t" style="left:1283.7px;top:242.39px;font-size:11px;line-height:11px;color:#333;letter-spacing:-0.291px;transform:scaleY(1.125);transform-origin:0 9.31px;">Order</div>
<div class="r" style="left:1315px;top:238px;width:68px;height:23px;background:#fff;border:1px solid #3b8fd6;border-radius:4px;"></div>
<div class="t" style="right:536.5px;top:242.89px;font-size:11px;line-height:11px;color:#333;letter-spacing:-0.367px;transform:scaleY(1.125);transform-origin:100% 9.31px;">4</div>
<div class="r" style="left:728px;top:268px;width:13px;height:13px;background:#fff;border:1px solid #8e8e8e;border-radius:2px;"></div>
<div class="t" style="left:744.4px;top:270.49px;font-size:11px;line-height:11px;color:#333;letter-spacing:-0.267px;transform:scaleY(1.125);transform-origin:0 9.31px;">Log enabled</div>
<div class="t" style="left:684.5px;top:293.88px;font-size:11.6px;line-height:11.6px;color:#555;font-weight:700;transform:scaleY(1.125);transform-origin:0 9.82px;">Subject Configurations</div>
<div class="r" style="left:815px;top:299px;width:80px;height:1px;background:#5c5c5c;"></div>
<div class="r" style="left:896px;top:289px;width:997px;height:21px;background:#f7f7f7;"></div>
<div class="r" style="left:895px;top:288px;width:999px;height:1px;background:#505050;"></div>
<div class="r" style="left:895px;top:289px;width:1px;height:21px;background:#c8c8c8;"></div>
<div class="r" style="left:895px;top:289px;width:1px;height:4px;background:#505050;"></div>
<div class="r" style="left:895px;top:306px;width:1px;height:4px;background:#505050;"></div>
<div class="r" style="left:895px;top:299px;width:1px;height:1px;background:#505050;"></div>
<div class="r" style="left:975px;top:289px;width:1px;height:21px;background:#c8c8c8;"></div>
<div class="r" style="left:975px;top:289px;width:1px;height:4px;background:#505050;"></div>
<div class="r" style="left:975px;top:306px;width:1px;height:4px;background:#505050;"></div>
<div class="r" style="left:975px;top:299px;width:1px;height:1px;background:#505050;"></div>
<div class="r" style="left:1315px;top:289px;width:1px;height:21px;background:#c8c8c8;"></div>
<div class="r" style="left:1315px;top:289px;width:1px;height:4px;background:#505050;"></div>
<div class="r" style="left:1315px;top:306px;width:1px;height:4px;background:#505050;"></div>
<div class="r" style="left:1315px;top:299px;width:1px;height:1px;background:#505050;"></div>
<div class="r" style="left:1645px;top:289px;width:1px;height:21px;background:#c8c8c8;"></div>
<div class="r" style="left:1645px;top:289px;width:1px;height:4px;background:#505050;"></div>
<div class="r" style="left:1645px;top:306px;width:1px;height:4px;background:#505050;"></div>
<div class="r" style="left:1645px;top:299px;width:1px;height:1px;background:#505050;"></div>
<div class="r" style="left:1893px;top:289px;width:1px;height:4px;background:#505050;"></div>
<div class="r" style="left:1893px;top:306px;width:1px;height:4px;background:#505050;"></div>
<div class="r" style="left:1893px;top:299px;width:1px;height:1px;background:#505050;"></div>
<div class="t" style="left:439px;width:1000px;text-align:center;top:293.68px;font-size:11.6px;line-height:11.6px;color:#333;font-weight:700;transform:scaleY(1.125);transform-origin:50% 9.82px;">Limit Value</div>
<div class="t" style="left:648.5px;width:1000px;text-align:center;top:293.68px;font-size:11.6px;line-height:11.6px;color:#333;font-weight:700;transform:scaleY(1.125);transform-origin:50% 9.82px;">Display</div>
<div class="t" style="left:984px;width:1000px;text-align:center;top:293.68px;font-size:11.6px;line-height:11.6px;color:#333;font-weight:700;transform:scaleY(1.125);transform-origin:50% 9.82px;">Search Settings</div>
<div class="t" style="left:1273.3px;width:1000px;text-align:center;top:293.68px;font-size:11.6px;line-height:11.6px;color:#333;font-weight:700;transform:scaleY(1.125);transform-origin:50% 9.82px;">Indexing Settings</div>
<div class="r" style="left:684px;top:310px;width:1210px;height:277px;background:#fdfdfd;border:1px solid #2088d2;"></div>
<div class="r" style="left:746px;top:336px;width:1px;height:232px;background:#ebebeb;"></div>
<div class="r" style="left:896px;top:336px;width:1px;height:232px;background:#ebebeb;"></div>
<div class="r" style="left:936px;top:336px;width:1px;height:232px;background:#ebebeb;"></div>
<div class="r" style="left:976px;top:336px;width:1px;height:232px;background:#ebebeb;"></div>
<div class="r" style="left:1041px;top:336px;width:1px;height:232px;background:#ebebeb;"></div>
<div class="r" style="left:1116px;top:336px;width:1px;height:232px;background:#ebebeb;"></div>
<div class="r" style="left:1191px;top:336px;width:1px;height:232px;background:#ebebeb;"></div>
<div class="r" style="left:1316px;top:336px;width:1px;height:232px;background:#ebebeb;"></div>
<div class="r" style="left:1391px;top:336px;width:1px;height:232px;background:#ebebeb;"></div>
<div class="r" style="left:1466px;top:336px;width:1px;height:232px;background:#ebebeb;"></div>
<div class="r" style="left:1556px;top:336px;width:1px;height:232px;background:#ebebeb;"></div>
<div class="r" style="left:1646px;top:336px;width:1px;height:232px;background:#ebebeb;"></div>
<div class="r" style="left:1721px;top:336px;width:1px;height:232px;background:#ebebeb;"></div>
<div class="r" style="left:1811px;top:336px;width:1px;height:232px;background:#ebebeb;"></div>
<div class="r" style="left:686px;top:360px;width:1205px;height:1px;background:#ebebeb;"></div>
<div class="r" style="left:686px;top:385px;width:1205px;height:1px;background:#ebebeb;"></div>
<div class="r" style="left:686px;top:410px;width:1205px;height:1px;background:#ebebeb;"></div>
<div class="r" style="left:686px;top:435px;width:1205px;height:1px;background:#ebebeb;"></div>
<div class="r" style="left:686px;top:460px;width:1205px;height:1px;background:#ebebeb;"></div>
<div class="r" style="left:686px;top:485px;width:1205px;height:1px;background:#ebebeb;"></div>
<div class="r" style="left:686px;top:510px;width:1205px;height:1px;background:#ebebeb;"></div>
<div class="r" style="left:686px;top:535px;width:1205px;height:1px;background:#ebebeb;"></div>
<div class="r" style="left:686px;top:560px;width:1205px;height:1px;background:#ebebeb;"></div>
<div class="r" style="left:686px;top:312px;width:1205px;height:24px;background:#f7f7f7;border-top:1px solid #d3d3d3;border-left:1px solid #d3d3d3;border-bottom:1px solid #c9c9c9;"></div>
<div class="r" style="left:745px;top:312px;width:2px;height:24px;background:#d3d3d3;"></div>
<div class="r" style="left:895px;top:312px;width:2px;height:24px;background:#d3d3d3;"></div>
<div class="r" style="left:935px;top:312px;width:2px;height:24px;background:#d3d3d3;"></div>
<div class="r" style="left:975px;top:312px;width:2px;height:24px;background:#d3d3d3;"></div>
<div class="r" style="left:1040px;top:312px;width:2px;height:24px;background:#d3d3d3;"></div>
<div class="r" style="left:1115px;top:312px;width:2px;height:24px;background:#d3d3d3;"></div>
<div class="r" style="left:1190px;top:312px;width:2px;height:24px;background:#d3d3d3;"></div>
<div class="r" style="left:1315px;top:312px;width:2px;height:24px;background:#d3d3d3;"></div>
<div class="r" style="left:1390px;top:312px;width:2px;height:24px;background:#d3d3d3;"></div>
<div class="r" style="left:1465px;top:312px;width:2px;height:24px;background:#d3d3d3;"></div>
<div class="r" style="left:1555px;top:312px;width:2px;height:24px;background:#d3d3d3;"></div>
<div class="r" style="left:1645px;top:312px;width:2px;height:24px;background:#d3d3d3;"></div>
<div class="r" style="left:1720px;top:312px;width:2px;height:24px;background:#d3d3d3;"></div>
<div class="r" style="left:1810px;top:312px;width:2px;height:24px;background:#d3d3d3;"></div>
<div class="t" style="right:1174.8px;top:319.39px;font-size:11px;line-height:11px;color:#383838;letter-spacing:-0.34px;transform:scaleY(1.125);transform-origin:100% 9.31px;">Code</div>
<div class="t" style="left:751.5px;top:319.39px;font-size:11px;line-height:11px;color:#383838;letter-spacing:-0.256px;transform:scaleY(1.125);transform-origin:0 9.31px;">Associated with</div>
<svg class="r" style="left:880px;top:321px;" width="10" height="7" viewBox="0 0 10 7"><path d="M0.6 6 L4.8 0.8 L9 6 Z" fill="#6e6e6e"/></svg>
<div class="t" style="right:985.5px;top:319.39px;font-size:11px;line-height:11px;color:#383838;letter-spacing:-0.283px;transform:scaleY(1.125);transform-origin:100% 9.31px;">Min.</div>
<div class="t" style="right:946px;top:319.39px;font-size:11px;line-height:11px;color:#383838;letter-spacing:-0.328px;transform:scaleY(1.125);transform-origin:100% 9.31px;">Max.</div>
<div class="t" style="left:982.2px;top:319.39px;font-size:11px;line-height:11px;color:#383838;letter-spacing:-0.192px;transform:scaleY(1.125);transform-origin:0 9.31px;">Sorting / ...</div>
<div class="t" style="left:1046.3px;top:319.39px;font-size:11px;line-height:11px;color:#383838;letter-spacing:-0.257px;transform:scaleY(1.125);transform-origin:0 9.31px;">Display che...</div>
<div class="t" style="left:1120.2px;top:319.39px;font-size:11px;line-height:11px;color:#383838;letter-spacing:-0.265px;transform:scaleY(1.125);transform-origin:0 9.31px;">Image (Posit...</div>
<div class="t" style="left:1195.1px;top:319.39px;font-size:11px;line-height:11px;color:#383838;letter-spacing:-0.101px;transform:scaleY(1.125);transform-origin:0 9.31px;">Help Tooltip</div>
<div class="t" style="left:853px;width:1000px;text-align:center;top:319.39px;font-size:11px;line-height:11px;color:#383838;letter-spacing:-0.307px;transform:scaleY(1.125);transform-origin:50% 9.31px;">Enable</div>
<div class="t" style="left:1396px;top:319.39px;font-size:11px;line-height:11px;color:#383838;letter-spacing:-0.306px;transform:scaleY(1.125);transform-origin:0 9.31px;">Nonexclusive</div>
<div class="t" style="left:1010px;width:1000px;text-align:center;top:319.39px;font-size:11px;line-height:11px;color:#383838;letter-spacing:-0.284px;transform:scaleY(1.125);transform-origin:50% 9.31px;">Option</div>
<div class="t" style="left:1100.5px;width:1000px;text-align:center;top:319.39px;font-size:11px;line-height:11px;color:#383838;letter-spacing:-0.292px;transform:scaleY(1.125);transform-origin:50% 9.31px;">WEB</div>
<div class="t" style="left:1183.5px;width:1000px;text-align:center;top:319.39px;font-size:11px;line-height:11px;color:#383838;letter-spacing:-0.307px;transform:scaleY(1.125);transform-origin:50% 9.31px;">Enable</div>
<div class="t" style="left:1265.5px;width:1000px;text-align:center;top:319.39px;font-size:11px;line-height:11px;color:#383838;letter-spacing:-0.284px;transform:scaleY(1.125);transform-origin:50% 9.31px;">Option</div>
<div class="t" style="left:1355.5px;width:1000px;text-align:center;top:319.39px;font-size:11px;line-height:11px;color:#383838;letter-spacing:-0.292px;transform:scaleY(1.125);transform-origin:50% 9.31px;">WEB</div>
<div class="t" style="right:1172.1px;top:344.49px;font-size:11px;line-height:11px;color:#383838;letter-spacing:-0.367px;transform:scaleY(1.125);transform-origin:100% 9.31px;">1500</div>
<div class="t" style="left:751.5px;top:344.49px;font-size:11px;line-height:11px;color:#383838;letter-spacing:-0.308px;transform:scaleY(1.125);transform-origin:0 9.31px;">Candidate</div>
<div class="t" style="right:985.5px;top:344.49px;font-size:11px;line-height:11px;color:#383838;letter-spacing:-0.367px;transform:scaleY(1.125);transform-origin:100% 9.31px;">0</div>
<div class="t" style="right:946px;top:344.49px;font-size:11px;line-height:11px;color:#383838;letter-spacing:-0.367px;transform:scaleY(1.125);transform-origin:100% 9.31px;">20</div>
<div class="t" style="left:578.7px;width:1000px;text-align:center;top:344.49px;font-size:11px;line-height:11px;color:#383838;letter-spacing:-0.257px;transform:scaleY(1.125);transform-origin:50% 9.31px;">X</div>
<div class="t" style="right:731px;top:344.49px;font-size:11px;line-height:11px;color:#383838;letter-spacing:-0.367px;transform:scaleY(1.125);transform-origin:100% 9.31px;">35</div>
<div class="t" style="left:1183.3px;width:1000px;text-align:center;top:344.49px;font-size:11px;line-height:11px;color:#383838;letter-spacing:-0.257px;transform:scaleY(1.125);transform-origin:50% 9.31px;">X</div>
<div class="t" style="left:1265.5px;width:1000px;text-align:center;top:344.49px;font-size:11px;line-height:11px;color:#383838;letter-spacing:-0.265px;transform:scaleY(1.125);transform-origin:50% 9.31px;">Active</div>
<div class="t" style="left:1355.5px;width:1000px;text-align:center;top:344.49px;font-size:11px;line-height:11px;color:#383838;letter-spacing:-0.265px;transform:scaleY(1.125);transform-origin:50% 9.31px;">Active</div>
<div class="t" style="right:1172.1px;top:369.49px;font-size:11px;line-height:11px;color:#383838;letter-spacing:-0.367px;transform:scaleY(1.125);transform-origin:100% 9.31px;">1502</div>
<div class="t" style="left:751.5px;top:369.49px;font-size:11px;line-height:11px;color:#383838;letter-spacing:-0.245px;transform:scaleY(1.125);transform-origin:0 9.31px;">Client</div>
<div class="t" style="right:985.5px;top:369.49px;font-size:11px;line-height:11px;color:#383838;letter-spacing:-0.367px;transform:scaleY(1.125);transform-origin:100% 9.31px;">0</div>
<div class="t" style="right:946px;top:369.49px;font-size:11px;line-height:11px;color:#383838;letter-spacing:-0.367px;transform:scaleY(1.125);transform-origin:100% 9.31px;">99</div>
<div class="t" style="left:578.7px;width:1000px;text-align:center;top:369.49px;font-size:11px;line-height:11px;color:#383838;letter-spacing:-0.257px;transform:scaleY(1.125);transform-origin:50% 9.31px;">X</div>
<div class="t" style="right:731px;top:369.49px;font-size:11px;line-height:11px;color:#383838;letter-spacing:-0.367px;transform:scaleY(1.125);transform-origin:100% 9.31px;">0</div>
<div class="t" style="left:1010.5px;width:1000px;text-align:center;top:369.49px;font-size:11px;line-height:11px;color:#383838;letter-spacing:-0.305px;transform:scaleY(1.125);transform-origin:50% 9.31px;">Required</div>
<div class="t" style="left:1100.5px;width:1000px;text-align:center;top:369.49px;font-size:11px;line-height:11px;color:#383838;letter-spacing:-0.305px;transform:scaleY(1.125);transform-origin:50% 9.31px;">Required</div>
<div class="t" style="left:1265.5px;width:1000px;text-align:center;top:369.49px;font-size:11px;line-height:11px;color:#383838;letter-spacing:-0.265px;transform:scaleY(1.125);transform-origin:50% 9.31px;">Active</div>
<div class="t" style="left:1355.5px;width:1000px;text-align:center;top:369.49px;font-size:11px;line-height:11px;color:#383838;letter-spacing:-0.265px;transform:scaleY(1.125);transform-origin:50% 9.31px;">Active</div>
<div class="r" style="left:690px;top:386px;width:206px;height:24px;background:#e6e6e6;"></div>
<div class="r" style="left:976px;top:386px;width:140px;height:24px;background:#e6e6e6;"></div>
<div class="r" style="left:1316px;top:386px;width:150px;height:24px;background:#e6e6e6;"></div>
<div class="r" style="left:1646px;top:386px;width:245px;height:24px;background:#e6e6e6;"></div>
<div class="r" style="left:745px;top:386px;width:1px;height:24px;background:#dedede;"></div>
<div class="r" style="left:1041px;top:386px;width:1px;height:24px;background:#dedede;"></div>
<div class="r" style="left:1391px;top:386px;width:1px;height:24px;background:#dedede;"></div>
<div class="r" style="left:1721px;top:386px;width:1px;height:24px;background:#dedede;"></div>
<div class="r" style="left:1811px;top:386px;width:1px;height:24px;background:#dedede;"></div>
<div class="t" style="right:1172.1px;top:394.49px;font-size:11px;line-height:11px;color:#383838;letter-spacing:-0.367px;transform:scaleY(1.125);transform-origin:100% 9.31px;">1504</div>
<div class="t" style="left:751.5px;top:394.49px;font-size:11px;line-height:11px;color:#383838;letter-spacing:-0.19px;transform:scaleY(1.125);transform-origin:0 9.31px;">Job offer</div>
<div class="r" style="left:872px;top:386px;width:23px;height:24px;background:#fcfcfc;border:1px solid #d2d2d2;border-radius:4px;"></div>
<svg class="r" style="left:872px;top:386px;" width="23" height="24" viewBox="0 0 23 24"><circle cx="12.9" cy="8.8" r="6.4" fill="none" stroke="#8dbbe3" stroke-width="1"/><path d="M8.4 13.5 L2.4 19.4" stroke="#7fb3de" stroke-width="1.1"/></svg>
<div class="t" style="right:985.5px;top:394.49px;font-size:11px;line-height:11px;color:#383838;letter-spacing:-0.367px;transform:scaleY(1.125);transform-origin:100% 9.31px;">0</div>
<div class="t" style="right:946px;top:394.49px;font-size:11px;line-height:11px;color:#383838;letter-spacing:-0.367px;transform:scaleY(1.125);transform-origin:100% 9.31px;">5</div>
<div class="r" style="left:1003px;top:390px;width:12px;height:13px;background:#fff;border:1px solid #9a9a9a;border-radius:2px;"></div>
<div class="r" style="left:1073px;top:390px;width:12px;height:13px;background:#fff;border:1px solid #9a9a9a;border-radius:2px;"></div>
<svg class="r" style="left:1073px;top:390px;" width="12" height="13" viewBox="0 0 12 13"><path d="M3.2 6.6 L5.5 9.4 L9.7 4.4" fill="none" stroke="#5e5e5e" stroke-width="1.35" stroke-linecap="round" stroke-linejoin="round"/></svg>
<div class="t" style="right:731px;top:394.49px;font-size:11px;line-height:11px;color:#383838;letter-spacing:-0.367px;transform:scaleY(1.125);transform-origin:100% 9.31px;">0</div>
<div class="r" style="left:1292px;top:387px;width:23px;height:23px;background:#fcfcfc;border:1px solid #d0d0d0;border-radius:3.5px;"></div>
<svg class="r" style="left:1292px;top:387px;" width="23" height="23" viewBox="0 0 23 23"><path d="M2.6 3.6 H19.2 V15.4 H10.6 L6 18.4 L6 15.4 H2.6 Z" fill="#fff" stroke="#c88fd4" stroke-width="1"/><path d="M5.8 6.4 H16.6 M5.8 8.5 H16.6" stroke="#c58bd2" stroke-width="0.9"/><rect x="5.8" y="10.2" width="10.8" height="1.8" fill="#d2a8dc"/></svg>
<div class="r" style="left:1348px;top:390px;width:12px;height:13px;background:#fff;border:1px solid #9a9a9a;border-radius:2px;"></div>
<svg class="r" style="left:1348px;top:390px;" width="12" height="13" viewBox="0 0 12 13"><path d="M3.2 6.6 L5.5 9.4 L9.7 4.4" fill="none" stroke="#5e5e5e" stroke-width="1.35" stroke-linecap="round" stroke-linejoin="round"/></svg>
<div class="r" style="left:1423px;top:390px;width:12px;height:13px;background:#fff;border:1px solid #9a9a9a;border-radius:2px;"></div>
<div class="r" style="left:1467px;top:386px;width:89px;height:24px;background:#fff;border:1px solid #c6c6c6;box-shadow:inset 0 0 0 1px #e6e6e6;"></div>
<div class="t" style="left:1471px;top:393.09px;font-size:11px;line-height:11px;color:#383838;letter-spacing:-0.289px;transform:scaleY(1.125);transform-origin:0 9.31px;">Asset</div>
<svg class="r" style="left:1542px;top:397px;" width="6" height="4" viewBox="0 0 6 4"><path d="M0 0.2 H5.6 L2.8 3.2 Z" fill="#6a6a6a"/></svg>
<div class="r" style="left:1557px;top:386px;width:89px;height:24px;background:#fff;border:1px solid #c6c6c6;box-shadow:inset 0 0 0 1px #e6e6e6;"></div>
<div class="t" style="left:1561px;top:393.09px;font-size:11px;line-height:11px;color:#383838;letter-spacing:-0.289px;transform:scaleY(1.125);transform-origin:0 9.31px;">Asset</div>
<svg class="r" style="left:1632px;top:397px;" width="6" height="4" viewBox="0 0 6 4"><path d="M0 0.2 H5.6 L2.8 3.2 Z" fill="#6a6a6a"/></svg>
<div class="r" style="left:1678px;top:390px;width:12px;height:13px;background:#fff;border:1px solid #9a9a9a;border-radius:2px;"></div>
<div class="t" style="right:1172.1px;top:419.49px;font-size:11px;line-height:11px;color:#383838;letter-spacing:-0.367px;transform:scaleY(1.125);transform-origin:100% 9.31px;">1575</div>
<div class="t" style="left:751.5px;top:419.49px;font-size:11px;line-height:11px;color:#383838;letter-spacing:-0.23px;transform:scaleY(1.125);transform-origin:0 9.31px;">Mission (Temporary groupe...</div>
<div class="t" style="right:985.5px;top:419.49px;font-size:11px;line-height:11px;color:#383838;letter-spacing:-0.367px;transform:scaleY(1.125);transform-origin:100% 9.31px;">0</div>
<div class="t" style="right:946px;top:419.49px;font-size:11px;line-height:11px;color:#383838;letter-spacing:-0.367px;transform:scaleY(1.125);transform-origin:100% 9.31px;">10</div>
<div class="t" style="left:578.7px;width:1000px;text-align:center;top:419.49px;font-size:11px;line-height:11px;color:#383838;letter-spacing:-0.257px;transform:scaleY(1.125);transform-origin:50% 9.31px;">X</div>
<div class="t" style="right:731px;top:419.49px;font-size:11px;line-height:11px;color:#383838;letter-spacing:-0.367px;transform:scaleY(1.125);transform-origin:100% 9.31px;">0</div>
<div class="t" style="left:853.3px;width:1000px;text-align:center;top:419.49px;font-size:11px;line-height:11px;color:#383838;letter-spacing:-0.257px;transform:scaleY(1.125);transform-origin:50% 9.31px;">X</div>
<div class="t" style="left:1010.5px;width:1000px;text-align:center;top:419.49px;font-size:11px;line-height:11px;color:#383838;letter-spacing:-0.305px;transform:scaleY(1.125);transform-origin:50% 9.31px;">Required</div>
<div class="t" style="left:1100.5px;width:1000px;text-align:center;top:419.49px;font-size:11px;line-height:11px;color:#383838;letter-spacing:-0.305px;transform:scaleY(1.125);transform-origin:50% 9.31px;">Required</div>
<div class="t" style="left:1265.5px;width:1000px;text-align:center;top:419.49px;font-size:11px;line-height:11px;color:#383838;letter-spacing:-0.265px;transform:scaleY(1.125);transform-origin:50% 9.31px;">Active</div>
<div class="t" style="left:1355.5px;width:1000px;text-align:center;top:419.49px;font-size:11px;line-height:11px;color:#383838;letter-spacing:-0.265px;transform:scaleY(1.125);transform-origin:50% 9.31px;">Active</div>
<div class="t" style="right:1172.1px;top:444.49px;font-size:11px;line-height:11px;color:#383838;letter-spacing:-0.367px;transform:scaleY(1.125);transform-origin:100% 9.31px;">1554</div>
<div class="t" style="left:751.5px;top:444.49px;font-size:11px;line-height:11px;color:#383838;letter-spacing:-0.255px;transform:scaleY(1.125);transform-origin:0 9.31px;">Purchase self managed job...</div>
<div class="t" style="right:985.5px;top:444.49px;font-size:11px;line-height:11px;color:#383838;letter-spacing:-0.367px;transform:scaleY(1.125);transform-origin:100% 9.31px;">0</div>
<div class="t" style="right:946px;top:444.49px;font-size:11px;line-height:11px;color:#383838;letter-spacing:-0.367px;transform:scaleY(1.125);transform-origin:100% 9.31px;">99</div>
<div class="t" style="left:578.7px;width:1000px;text-align:center;top:444.49px;font-size:11px;line-height:11px;color:#383838;letter-spacing:-0.257px;transform:scaleY(1.125);transform-origin:50% 9.31px;">X</div>
<div class="t" style="right:731px;top:444.49px;font-size:11px;line-height:11px;color:#383838;letter-spacing:-0.367px;transform:scaleY(1.125);transform-origin:100% 9.31px;">0</div>
<div class="t" style="left:853.3px;width:1000px;text-align:center;top:444.49px;font-size:11px;line-height:11px;color:#383838;letter-spacing:-0.257px;transform:scaleY(1.125);transform-origin:50% 9.31px;">X</div>
<div class="t" style="left:1010.5px;width:1000px;text-align:center;top:444.49px;font-size:11px;line-height:11px;color:#383838;letter-spacing:-0.305px;transform:scaleY(1.125);transform-origin:50% 9.31px;">Required</div>
<div class="t" style="left:1100.5px;width:1000px;text-align:center;top:444.49px;font-size:11px;line-height:11px;color:#383838;letter-spacing:-0.305px;transform:scaleY(1.125);transform-origin:50% 9.31px;">Required</div>
<div class="t" style="left:1265.5px;width:1000px;text-align:center;top:444.49px;font-size:11px;line-height:11px;color:#383838;letter-spacing:-0.265px;transform:scaleY(1.125);transform-origin:50% 9.31px;">Active</div>
<div class="t" style="left:1355.5px;width:1000px;text-align:center;top:444.49px;font-size:11px;line-height:11px;color:#383838;letter-spacing:-0.265px;transform:scaleY(1.125);transform-origin:50% 9.31px;">Active</div>
<div class="t" style="right:1172.1px;top:469.49px;font-size:11px;line-height:11px;color:#383838;letter-spacing:-0.367px;transform:scaleY(1.125);transform-origin:100% 9.31px;">1505</div>
<div class="t" style="left:751.5px;top:469.49px;font-size:11px;line-height:11px;color:#383838;letter-spacing:-0.33px;transform:scaleY(1.125);transform-origin:0 9.31px;">Replacement</div>
<div class="t" style="right:985.5px;top:469.49px;font-size:11px;line-height:11px;color:#383838;letter-spacing:-0.367px;transform:scaleY(1.125);transform-origin:100% 9.31px;">0</div>
<div class="t" style="right:946px;top:469.49px;font-size:11px;line-height:11px;color:#383838;letter-spacing:-0.367px;transform:scaleY(1.125);transform-origin:100% 9.31px;">3</div>
<div class="t" style="left:578.7px;width:1000px;text-align:center;top:469.49px;font-size:11px;line-height:11px;color:#383838;letter-spacing:-0.257px;transform:scaleY(1.125);transform-origin:50% 9.31px;">X</div>
<div class="t" style="right:731px;top:469.49px;font-size:11px;line-height:11px;color:#383838;letter-spacing:-0.367px;transform:scaleY(1.125);transform-origin:100% 9.31px;">35</div>
<div class="t" style="left:853.3px;width:1000px;text-align:center;top:469.49px;font-size:11px;line-height:11px;color:#383838;letter-spacing:-0.257px;transform:scaleY(1.125);transform-origin:50% 9.31px;">X</div>
<div class="t" style="left:1010.5px;width:1000px;text-align:center;top:469.49px;font-size:11px;line-height:11px;color:#383838;letter-spacing:-0.305px;transform:scaleY(1.125);transform-origin:50% 9.31px;">Required</div>
<div class="t" style="left:1100.5px;width:1000px;text-align:center;top:469.49px;font-size:11px;line-height:11px;color:#383838;letter-spacing:-0.305px;transform:scaleY(1.125);transform-origin:50% 9.31px;">Required</div>
<div class="t" style="right:1172.1px;top:494.49px;font-size:11px;line-height:11px;color:#383838;letter-spacing:-0.367px;transform:scaleY(1.125);transform-origin:100% 9.31px;">1503</div>
<div class="t" style="left:751.5px;top:494.49px;font-size:11px;line-height:11px;color:#383838;letter-spacing:-0.262px;transform:scaleY(1.125);transform-origin:0 9.31px;">Request type</div>
<div class="t" style="right:985.5px;top:494.49px;font-size:11px;line-height:11px;color:#383838;letter-spacing:-0.367px;transform:scaleY(1.125);transform-origin:100% 9.31px;">0</div>
<div class="t" style="right:946px;top:494.49px;font-size:11px;line-height:11px;color:#383838;letter-spacing:-0.367px;transform:scaleY(1.125);transform-origin:100% 9.31px;">1</div>
<div class="t" style="left:578.7px;width:1000px;text-align:center;top:494.49px;font-size:11px;line-height:11px;color:#383838;letter-spacing:-0.257px;transform:scaleY(1.125);transform-origin:50% 9.31px;">X</div>
<div class="t" style="right:731px;top:494.49px;font-size:11px;line-height:11px;color:#383838;letter-spacing:-0.367px;transform:scaleY(1.125);transform-origin:100% 9.31px;">0</div>
<div class="t" style="left:853.3px;width:1000px;text-align:center;top:494.49px;font-size:11px;line-height:11px;color:#383838;letter-spacing:-0.257px;transform:scaleY(1.125);transform-origin:50% 9.31px;">X</div>
<div class="t" style="left:1010.5px;width:1000px;text-align:center;top:494.49px;font-size:11px;line-height:11px;color:#383838;letter-spacing:-0.305px;transform:scaleY(1.125);transform-origin:50% 9.31px;">Required</div>
<div class="t" style="left:1100.5px;width:1000px;text-align:center;top:494.49px;font-size:11px;line-height:11px;color:#383838;letter-spacing:-0.305px;transform:scaleY(1.125);transform-origin:50% 9.31px;">Required</div>
<div class="r" style="left:929.3px;top:363.6px;width:3px;height:3px;background:#e8302f;border-radius:50%;"></div>
<div class="r" style="left:685px;top:568px;width:1207px;height:18px;background:#f0f0f0;"></div>
<svg class="r" style="left:691px;top:572px;" width="7" height="10" viewBox="0 0 7 10"><path d="M5.8 0.4 L0.8 4.6 L5.8 8.8 Z" fill="#6e6e6e"/></svg>
<div class="r" style="left:703px;top:572px;width:1096px;height:9px;background:#c8c8c8;border-radius:4.5px;"></div>
<svg class="r" style="left:1880px;top:572px;" width="7" height="10" viewBox="0 0 7 10"><path d="M0.8 0.4 L5.8 4.6 L0.8 8.8 Z" fill="#6e6e6e"/></svg>
<div class="t" style="left:684.4px;top:593.88px;font-size:11.6px;line-height:11.6px;color:#555;font-weight:700;transform:scaleY(1.125);transform-origin:0 9.82px;">Subject filters</div>
<div class="r" style="left:765px;top:599px;width:501px;height:1px;background:#5c5c5c;"></div>
<div class="r" style="left:684px;top:608px;width:582px;height:405px;background:#fdfdfd;border:1px solid #cdcdcd;"></div>
<div class="r" style="left:706px;top:631px;width:1px;height:380px;background:#ebebeb;"></div>
<div class="r" style="left:771px;top:631px;width:1px;height:380px;background:#ebebeb;"></div>
<div class="r" style="left:936px;top:631px;width:1px;height:380px;background:#ebebeb;"></div>
<div class="r" style="left:686px;top:656px;width:561px;height:1px;background:#ebebeb;"></div>
<div class="r" style="left:686px;top:681px;width:561px;height:1px;background:#ebebeb;"></div>
<div class="r" style="left:686px;top:706px;width:561px;height:1px;background:#ebebeb;"></div>
<div class="r" style="left:686px;top:731px;width:561px;height:1px;background:#ebebeb;"></div>
<div class="r" style="left:686px;top:756px;width:561px;height:1px;background:#ebebeb;"></div>
<div class="r" style="left:686px;top:781px;width:561px;height:1px;background:#ebebeb;"></div>
<div class="r" style="left:686px;top:806px;width:561px;height:1px;background:#ebebeb;"></div>
<div class="r" style="left:686px;top:831px;width:561px;height:1px;background:#ebebeb;"></div>
<div class="r" style="left:686px;top:856px;width:561px;height:1px;background:#ebebeb;"></div>
<div class="r" style="left:686px;top:881px;width:561px;height:1px;background:#ebebeb;"></div>
<div class="r" style="left:686px;top:906px;width:561px;height:1px;background:#ebebeb;"></div>
<div class="r" style="left:686px;top:931px;width:561px;height:1px;background:#ebebeb;"></div>
<div class="r" style="left:686px;top:956px;width:561px;height:1px;background:#ebebeb;"></div>
<div class="r" style="left:686px;top:981px;width:561px;height:1px;background:#ebebeb;"></div>
<div class="r" style="left:686px;top:1006px;width:561px;height:1px;background:#ebebeb;"></div>
<div class="r" style="left:685px;top:609px;width:562px;height:23px;background:#f7f7f7;border-left:1px solid #d3d3d3;border-bottom:1px solid #c9c9c9;"></div>
<div class="r" style="left:705px;top:609px;width:2px;height:23px;background:#d3d3d3;"></div>
<div class="r" style="left:770px;top:609px;width:2px;height:23px;background:#d3d3d3;"></div>
<div class="r" style="left:935px;top:609px;width:2px;height:23px;background:#d3d3d3;"></div>
<div class="r" style="left:691px;top:615px;width:11px;height:11px;background:#fff;border:1px solid #9a9a9a;border-radius:2px;"></div>
<div class="t" style="left:709.7px;top:614.59px;font-size:11px;line-height:11px;color:#383838;letter-spacing:-0.34px;transform:scaleY(1.125);transform-origin:0 9.31px;">Code</div>
<div class="t" style="left:775.3px;top:614.59px;font-size:11px;line-height:11px;color:#383838;letter-spacing:-0.278px;transform:scaleY(1.125);transform-origin:0 9.31px;">Description</div>
<div class="r" style="left:707px;top:632px;width:229px;height:24px;background:#e6e6e6;"></div>
<div class="r" style="left:771px;top:632px;width:1px;height:24px;background:#dcdcdc;"></div>
<div class="r" style="left:691px;top:638px;width:11px;height:11px;background:#fff;border:1px solid #9a9a9a;border-radius:2px;"></div>
<svg class="r" style="left:691px;top:638px;" width="11" height="11" viewBox="0 0 11 11"><path d="M2.2 5.4 L4.4 8.4 L8.8 3.4" fill="none" stroke="#5e5e5e" stroke-width="1.35" stroke-linecap="round" stroke-linejoin="round"/></svg>
<div class="t" style="left:712.1px;top:640.09px;font-size:11px;line-height:11px;color:#383838;letter-spacing:-0.367px;transform:scaleY(1.125);transform-origin:0 9.31px;">001</div>
<div class="t" style="left:777.2px;top:640.09px;font-size:11px;line-height:11px;color:#383838;letter-spacing:-0.248px;transform:scaleY(1.125);transform-origin:0 9.31px;">Head Chef</div>
<div class="r" style="left:691px;top:663px;width:11px;height:11px;background:#fff;border:1px solid #9a9a9a;border-radius:2px;"></div>
<svg class="r" style="left:691px;top:663px;" width="11" height="11" viewBox="0 0 11 11"><path d="M2.2 5.4 L4.4 8.4 L8.8 3.4" fill="none" stroke="#5e5e5e" stroke-width="1.35" stroke-linecap="round" stroke-linejoin="round"/></svg>
<div class="t" style="left:712.1px;top:665.09px;font-size:11px;line-height:11px;color:#383838;letter-spacing:-0.242px;transform:scaleY(1.125);transform-origin:0 9.31px;">ADJ</div>
<div class="t" style="left:777.2px;top:665.09px;font-size:11px;line-height:11px;color:#383838;letter-spacing:-0.273px;transform:scaleY(1.125);transform-origin:0 9.31px;">Assistant</div>
<div class="r" style="left:691px;top:688px;width:11px;height:11px;background:#fff;border:1px solid #9a9a9a;border-radius:2px;"></div>
<div class="t" style="left:712.1px;top:690.09px;font-size:11px;line-height:11px;color:#383838;letter-spacing:-0.257px;transform:scaleY(1.125);transform-origin:0 9.31px;">AS</div>
<div class="t" style="left:777.2px;top:690.09px;font-size:11px;line-height:11px;color:#383838;letter-spacing:-0.282px;transform:scaleY(1.125);transform-origin:0 9.31px;">Assistante</div>
<div class="r" style="left:691px;top:713px;width:11px;height:11px;background:#fff;border:1px solid #9a9a9a;border-radius:2px;"></div>
<svg class="r" style="left:691px;top:713px;" width="11" height="11" viewBox="0 0 11 11"><path d="M2.2 5.4 L4.4 8.4 L8.8 3.4" fill="none" stroke="#5e5e5e" stroke-width="1.35" stroke-linecap="round" stroke-linejoin="round"/></svg>
<div class="t" style="left:712.1px;top:715.09px;font-size:11px;line-height:11px;color:#383838;letter-spacing:-0.207px;transform:scaleY(1.125);transform-origin:0 9.31px;">INT</div>
<div class="t" style="left:777.2px;top:715.09px;font-size:11px;line-height:11px;color:#383838;letter-spacing:-0.27px;transform:scaleY(1.125);transform-origin:0 9.31px;">Integrator</div>
<div class="r" style="left:691px;top:738px;width:11px;height:11px;background:#fff;border:1px solid #9a9a9a;border-radius:2px;"></div>
<svg class="r" style="left:691px;top:738px;" width="11" height="11" viewBox="0 0 11 11"><path d="M2.2 5.4 L4.4 8.4 L8.8 3.4" fill="none" stroke="#5e5e5e" stroke-width="1.35" stroke-linecap="round" stroke-linejoin="round"/></svg>
<div class="t" style="left:712.1px;top:740.09px;font-size:11px;line-height:11px;color:#383838;letter-spacing:-0.264px;transform:scaleY(1.125);transform-origin:0 9.31px;">ADA</div>
<div class="t" style="left:777.2px;top:740.09px;font-size:11px;line-height:11px;color:#383838;letter-spacing:-0.256px;transform:scaleY(1.125);transform-origin:0 9.31px;">Administrative assistant</div>
<div class="r" style="left:691px;top:763px;width:11px;height:11px;background:#fff;border:1px solid #9a9a9a;border-radius:2px;"></div>
<svg class="r" style="left:691px;top:763px;" width="11" height="11" viewBox="0 0 11 11"><path d="M2.2 5.4 L4.4 8.4 L8.8 3.4" fill="none" stroke="#5e5e5e" stroke-width="1.35" stroke-linecap="round" stroke-linejoin="round"/></svg>
<div class="t" style="left:712.1px;top:765.09px;font-size:11px;line-height:11px;color:#383838;letter-spacing:-0.264px;transform:scaleY(1.125);transform-origin:0 9.31px;">AUX</div>
<div class="t" style="left:777.2px;top:765.09px;font-size:11px;line-height:11px;color:#383838;letter-spacing:-0.253px;transform:scaleY(1.125);transform-origin:0 9.31px;">Nursing assistant</div>
<div class="r" style="left:691px;top:788px;width:11px;height:11px;background:#fff;border:1px solid #9a9a9a;border-radius:2px;"></div>
<svg class="r" style="left:691px;top:788px;" width="11" height="11" viewBox="0 0 11 11"><path d="M2.2 5.4 L4.4 8.4 L8.8 3.4" fill="none" stroke="#5e5e5e" stroke-width="1.35" stroke-linecap="round" stroke-linejoin="round"/></svg>
<div class="t" style="left:712.1px;top:790.09px;font-size:11px;line-height:11px;color:#383838;letter-spacing:0.023px;transform:scaleY(1.125);transform-origin:0 9.31px;">ATP</div>
<div class="t" style="left:777.2px;top:790.09px;font-size:11px;line-height:11px;color:#383838;letter-spacing:-0.206px;transform:scaleY(1.125);transform-origin:0 9.31px;">Technical assistant in pharmacy</div>
<div class="r" style="left:691px;top:813px;width:11px;height:11px;background:#fff;border:1px solid #9a9a9a;border-radius:2px;"></div>
<svg class="r" style="left:691px;top:813px;" width="11" height="11" viewBox="0 0 11 11"><path d="M2.2 5.4 L4.4 8.4 L8.8 3.4" fill="none" stroke="#5e5e5e" stroke-width="1.35" stroke-linecap="round" stroke-linejoin="round"/></svg>
<div class="t" style="left:712.1px;top:815.09px;font-size:11px;line-height:11px;color:#383838;letter-spacing:-0.214px;transform:scaleY(1.125);transform-origin:0 9.31px;">CAI</div>
<div class="t" style="left:777.2px;top:815.09px;font-size:11px;line-height:11px;color:#383838;letter-spacing:-0.265px;transform:scaleY(1.125);transform-origin:0 9.31px;">Clerk</div>
<div class="r" style="left:691px;top:838px;width:11px;height:11px;background:#fff;border:1px solid #9a9a9a;border-radius:2px;"></div>
<svg class="r" style="left:691px;top:838px;" width="11" height="11" viewBox="0 0 11 11"><path d="M2.2 5.4 L4.4 8.4 L8.8 3.4" fill="none" stroke="#5e5e5e" stroke-width="1.35" stroke-linecap="round" stroke-linejoin="round"/></svg>
<div class="t" style="left:712.1px;top:840.09px;font-size:11px;line-height:11px;color:#383838;letter-spacing:-0.271px;transform:scaleY(1.125);transform-origin:0 9.31px;">CAR</div>
<div class="t" style="left:777.2px;top:840.09px;font-size:11px;line-height:11px;color:#383838;letter-spacing:-0.218px;transform:scaleY(1.125);transform-origin:0 9.31px;">Lift operator</div>
<div class="r" style="left:691px;top:863px;width:11px;height:11px;background:#fff;border:1px solid #9a9a9a;border-radius:2px;"></div>
<svg class="r" style="left:691px;top:863px;" width="11" height="11" viewBox="0 0 11 11"><path d="M2.2 5.4 L4.4 8.4 L8.8 3.4" fill="none" stroke="#5e5e5e" stroke-width="1.35" stroke-linecap="round" stroke-linejoin="round"/></svg>
<div class="t" style="left:712.1px;top:865.09px;font-size:11px;line-height:11px;color:#383838;letter-spacing:0.015px;transform:scaleY(1.125);transform-origin:0 9.31px;">PAB</div>
<div class="t" style="left:777.2px;top:865.09px;font-size:11px;line-height:11px;color:#383838;letter-spacing:-0.259px;transform:scaleY(1.125);transform-origin:0 9.31px;">Beneficiary attendant</div>
<div class="r" style="left:691px;top:888px;width:11px;height:11px;background:#fff;border:1px solid #9a9a9a;border-radius:2px;"></div>
<svg class="r" style="left:691px;top:888px;" width="11" height="11" viewBox="0 0 11 11"><path d="M2.2 5.4 L4.4 8.4 L8.8 3.4" fill="none" stroke="#5e5e5e" stroke-width="1.35" stroke-linecap="round" stroke-linejoin="round"/></svg>
<div class="t" style="left:712.1px;top:890.09px;font-size:11px;line-height:11px;color:#383838;letter-spacing:-0.207px;transform:scaleY(1.125);transform-origin:0 9.31px;">INF</div>
<div class="t" style="left:777.2px;top:890.09px;font-size:11px;line-height:11px;color:#383838;letter-spacing:-0.256px;transform:scaleY(1.125);transform-origin:0 9.31px;">Countable clerk</div>
<div class="r" style="left:691px;top:913px;width:11px;height:11px;background:#fff;border:1px solid #9a9a9a;border-radius:2px;"></div>
<svg class="r" style="left:691px;top:913px;" width="11" height="11" viewBox="0 0 11 11"><path d="M2.2 5.4 L4.4 8.4 L8.8 3.4" fill="none" stroke="#5e5e5e" stroke-width="1.35" stroke-linecap="round" stroke-linejoin="round"/></svg>
<div class="t" style="left:712.1px;top:915.09px;font-size:11px;line-height:11px;color:#383838;letter-spacing:-0.221px;transform:scaleY(1.125);transform-origin:0 9.31px;">CUI</div>
<div class="t" style="left:777.2px;top:915.09px;font-size:11px;line-height:11px;color:#383838;letter-spacing:-0.331px;transform:scaleY(1.125);transform-origin:0 9.31px;">Cook</div>
<div class="r" style="left:691px;top:938px;width:11px;height:11px;background:#fff;border:1px solid #9a9a9a;border-radius:2px;"></div>
<svg class="r" style="left:691px;top:938px;" width="11" height="11" viewBox="0 0 11 11"><path d="M2.2 5.4 L4.4 8.4 L8.8 3.4" fill="none" stroke="#5e5e5e" stroke-width="1.35" stroke-linecap="round" stroke-linejoin="round"/></svg>
<div class="t" style="left:712.1px;top:940.09px;font-size:11px;line-height:11px;color:#383838;letter-spacing:-0.271px;transform:scaleY(1.125);transform-origin:0 9.31px;">DEC</div>
<div class="t" style="left:777.2px;top:940.09px;font-size:11px;line-height:11px;color:#383838;letter-spacing:-0.301px;transform:scaleY(1.125);transform-origin:0 9.31px;">Designer</div>
<div class="r" style="left:691px;top:963px;width:11px;height:11px;background:#fff;border:1px solid #9a9a9a;border-radius:2px;"></div>
<svg class="r" style="left:691px;top:963px;" width="11" height="11" viewBox="0 0 11 11"><path d="M2.2 5.4 L4.4 8.4 L8.8 3.4" fill="none" stroke="#5e5e5e" stroke-width="1.35" stroke-linecap="round" stroke-linejoin="round"/></svg>
<div class="t" style="left:712.1px;top:965.09px;font-size:11px;line-height:11px;color:#383838;letter-spacing:-0.278px;transform:scaleY(1.125);transform-origin:0 9.31px;">EMB</div>
<div class="t" style="left:777.2px;top:965.09px;font-size:11px;line-height:11px;color:#383838;letter-spacing:-0.307px;transform:scaleY(1.125);transform-origin:0 9.31px;">Packer</div>
<div class="r" style="left:691px;top:988px;width:11px;height:11px;background:#fff;border:1px solid #9a9a9a;border-radius:2px;"></div>
<svg class="r" style="left:691px;top:988px;" width="11" height="11" viewBox="0 0 11 11"><path d="M2.2 5.4 L4.4 8.4 L8.8 3.4" fill="none" stroke="#5e5e5e" stroke-width="1.35" stroke-linecap="round" stroke-linejoin="round"/></svg>
<div class="t" style="left:712.1px;top:990.09px;font-size:11px;line-height:11px;color:#383838;letter-spacing:-0.271px;transform:scaleY(1.125);transform-origin:0 9.31px;">GES</div>
<div class="t" style="left:777.2px;top:990.09px;font-size:11px;line-height:11px;color:#383838;letter-spacing:-0.281px;transform:scaleY(1.125);transform-origin:0 9.31px;">Administrator</div>
<div class="r" style="left:1247px;top:608px;width:17px;height:404px;background:#f0f0f0;"></div>
<svg class="r" style="left:1250px;top:614px;" width="11" height="6" viewBox="0 0 11 6"><path d="M0.6 5.2 L5.2 0.4 L9.8 5.2 Z" fill="#6e6e6e"/></svg>
<div class="r" style="left:1251px;top:625px;width:9px;height:221px;background:#c8c8c8;border-radius:4.5px;"></div>
<svg class="r" style="left:1250px;top:1001px;" width="11" height="6" viewBox="0 0 11 6"><path d="M0.6 0.4 L5.2 5.2 L9.8 0.4 Z" fill="#6e6e6e"/></svg>
<div class="t" style="left:1294.8px;top:593.18px;font-size:11.6px;line-height:11.6px;color:#555;font-weight:700;transform:scaleY(1.125);transform-origin:0 9.82px;">Subject Properties/functions</div>
<div class="r" style="left:1459px;top:599px;width:433px;height:1px;background:#5c5c5c;"></div>
<div class="r" style="left:1294px;top:608px;width:599px;height:202px;background:#fdfdfd;border:1px solid #cdcdcd;"></div>
<div class="r" style="left:1556px;top:633px;width:1px;height:175px;background:#ebebeb;"></div>
<div class="r" style="left:1606px;top:633px;width:1px;height:175px;background:#ebebeb;"></div>
<div class="r" style="left:1296px;top:658px;width:578px;height:1px;background:#ebebeb;"></div>
<div class="r" style="left:1296px;top:683px;width:578px;height:1px;background:#ebebeb;"></div>
<div class="r" style="left:1296px;top:708px;width:578px;height:1px;background:#ebebeb;"></div>
<div class="r" style="left:1296px;top:733px;width:578px;height:1px;background:#ebebeb;"></div>
<div class="r" style="left:1296px;top:758px;width:578px;height:1px;background:#ebebeb;"></div>
<div class="r" style="left:1296px;top:783px;width:578px;height:1px;background:#ebebeb;"></div>
<div class="r" style="left:1296px;top:610px;width:578px;height:24px;background:#f7f7f7;border-top:1px solid #d3d3d3;border-left:1px solid #d3d3d3;border-bottom:1px solid #c9c9c9;"></div>
<div class="r" style="left:1555px;top:610px;width:2px;height:24px;background:#d3d3d3;"></div>
<div class="r" style="left:1605px;top:610px;width:2px;height:24px;background:#d3d3d3;"></div>
<div class="t" style="left:1300.3px;top:617.29px;font-size:11px;line-height:11px;color:#383838;letter-spacing:-0.188px;transform:scaleY(1.125);transform-origin:0 9.31px;">Property Type</div>
<div class="t" style="left:1559.8px;top:617.29px;font-size:11px;line-height:11px;color:#383838;letter-spacing:-0.34px;transform:scaleY(1.125);transform-origin:0 9.31px;">Code</div>
<div class="r" style="left:1317px;top:634px;width:289px;height:24px;background:#e6e6e6;"></div>
<div class="r" style="left:1556px;top:634px;width:1px;height:24px;background:#dcdcdc;"></div>
<div class="r" style="left:1301px;top:640px;width:11px;height:11px;background:#fff;border:1px solid #9a9a9a;border-radius:2px;"></div>
<svg class="r" style="left:1301px;top:640px;" width="11" height="11" viewBox="0 0 11 11"><path d="M2.2 5.4 L4.4 8.4 L8.8 3.4" fill="none" stroke="#5e5e5e" stroke-width="1.35" stroke-linecap="round" stroke-linejoin="round"/></svg>
<div class="t" style="left:1319px;top:641.99px;font-size:11px;line-height:11px;color:#383838;letter-spacing:-0.13px;transform:scaleY(1.125);transform-origin:0 9.31px;">Affichage dans la liste ATS</div>
<div class="t" style="left:1561px;top:641.99px;font-size:11px;line-height:11px;color:#383838;letter-spacing:0.023px;transform:scaleY(1.125);transform-origin:0 9.31px;">ATS</div>
<div class="r" style="left:1301px;top:665px;width:11px;height:11px;background:#fff;border:1px solid #9a9a9a;border-radius:2px;"></div>
<svg class="r" style="left:1301px;top:665px;" width="11" height="11" viewBox="0 0 11 11"><path d="M2.2 5.4 L4.4 8.4 L8.8 3.4" fill="none" stroke="#5e5e5e" stroke-width="1.35" stroke-linecap="round" stroke-linejoin="round"/></svg>
<div class="t" style="left:1319px;top:666.99px;font-size:11px;line-height:11px;color:#383838;letter-spacing:-0.205px;transform:scaleY(1.125);transform-origin:0 9.31px;">Affichage dans les listes associées à la facturati...</div>
<div class="t" style="left:1561px;top:666.99px;font-size:11px;line-height:11px;color:#383838;letter-spacing:-0.214px;transform:scaleY(1.125);transform-origin:0 9.31px;">INV</div>
<div class="r" style="left:1301px;top:690px;width:11px;height:11px;background:#fff;border:1px solid #9a9a9a;border-radius:2px;"></div>
<svg class="r" style="left:1301px;top:690px;" width="11" height="11" viewBox="0 0 11 11"><path d="M2.2 5.4 L4.4 8.4 L8.8 3.4" fill="none" stroke="#5e5e5e" stroke-width="1.35" stroke-linecap="round" stroke-linejoin="round"/></svg>
<div class="t" style="left:1319px;top:691.99px;font-size:11px;line-height:11px;color:#383838;letter-spacing:-0.207px;transform:scaleY(1.125);transform-origin:0 9.31px;">Ajouter au moteur de recherch  du Babillard d'e...</div>
<div class="t" style="left:1561px;top:691.99px;font-size:11px;line-height:11px;color:#383838;letter-spacing:-0.235px;transform:scaleY(1.125);transform-origin:0 9.31px;">JBS</div>
<div class="r" style="left:1301px;top:715px;width:11px;height:11px;background:#fff;border:1px solid #9a9a9a;border-radius:2px;"></div>
<div class="t" style="left:1319px;top:716.99px;font-size:11px;line-height:11px;color:#383838;letter-spacing:-0.263px;transform:scaleY(1.125);transform-origin:0 9.31px;">Candidate function</div>
<div class="t" style="left:1561px;top:716.99px;font-size:11px;line-height:11px;color:#383838;letter-spacing:-0.271px;transform:scaleY(1.125);transform-origin:0 9.31px;">FON</div>
<div class="r" style="left:1301px;top:740px;width:11px;height:11px;background:#fff;border:1px solid #9a9a9a;border-radius:2px;"></div>
<div class="t" style="left:1319px;top:741.99px;font-size:11px;line-height:11px;color:#383838;letter-spacing:-0.207px;transform:scaleY(1.125);transform-origin:0 9.31px;">Display job details PRIMWEB</div>
<div class="t" style="left:1561px;top:741.99px;font-size:11px;line-height:11px;color:#383838;letter-spacing:-0.157px;transform:scaleY(1.125);transform-origin:0 9.31px;">AWE</div>
<div class="r" style="left:1301px;top:765px;width:11px;height:11px;background:#fff;border:1px solid #9a9a9a;border-radius:2px;"></div>
<svg class="r" style="left:1301px;top:765px;" width="11" height="11" viewBox="0 0 11 11"><path d="M2.2 5.4 L4.4 8.4 L8.8 3.4" fill="none" stroke="#5e5e5e" stroke-width="1.35" stroke-linecap="round" stroke-linejoin="round"/></svg>
<div class="t" style="left:1319px;top:766.99px;font-size:11px;line-height:11px;color:#383838;letter-spacing:-0.197px;transform:scaleY(1.125);transform-origin:0 9.31px;">Display on external job offer</div>
<div class="t" style="left:1561px;top:766.99px;font-size:11px;line-height:11px;color:#383838;letter-spacing:-0.25px;transform:scaleY(1.125);transform-origin:0 9.31px;">AFP</div>
<div class="r" style="left:1301px;top:790px;width:11px;height:11px;background:#fff;border:1px solid #9a9a9a;border-radius:2px;"></div>
<div class="t" style="left:1319px;top:791.99px;font-size:11px;line-height:11px;color:#383838;letter-spacing:-0.191px;transform:scaleY(1.125);transform-origin:0 9.31px;">Display on internal job offer</div>
<div class="t" style="left:1561px;top:791.99px;font-size:11px;line-height:11px;color:#383838;letter-spacing:-0.2px;transform:scaleY(1.125);transform-origin:0 9.31px;">FIP</div>
<div class="r" style="left:1874px;top:609px;width:17px;height:200px;background:#f0f0f0;"></div>
<svg class="r" style="left:1877px;top:615px;" width="11" height="6" viewBox="0 0 11 6"><path d="M0.6 5.2 L5.2 0.4 L9.8 5.2 Z" fill="#6e6e6e"/></svg>
<div class="r" style="left:1878px;top:627px;width:9px;height:51px;background:#c8c8c8;border-radius:4.5px;"></div>
<svg class="r" style="left:1877px;top:798px;" width="11" height="6" viewBox="0 0 11 6"><path d="M0.6 0.4 L5.2 5.2 L9.8 0.4 Z" fill="#6e6e6e"/></svg>
<div class="t" style="left:1295px;top:820.98px;font-size:11.6px;line-height:11.6px;color:#555;font-weight:700;transform:scaleY(1.125);transform-origin:0 9.82px;">Exclusion configuration</div>
<div class="r" style="left:1429px;top:827px;width:463px;height:1px;background:#5c5c5c;"></div>
<div class="r" style="left:1294px;top:838px;width:599px;height:175px;background:#fdfdfd;border:1px solid #2088d2;"></div>
<div class="r" style="left:1546px;top:864px;width:1px;height:147px;background:#ebebeb;"></div>
<div class="r" style="left:1296px;top:888px;width:595px;height:1px;background:#ebebeb;"></div>
<div class="r" style="left:1296px;top:913px;width:595px;height:1px;background:#ebebeb;"></div>
<div class="r" style="left:1296px;top:938px;width:595px;height:1px;background:#ebebeb;"></div>
<div class="r" style="left:1296px;top:963px;width:595px;height:1px;background:#ebebeb;"></div>
<div class="r" style="left:1296px;top:988px;width:595px;height:1px;background:#ebebeb;"></div>
<div class="r" style="left:1296px;top:1013px;width:595px;height:1px;background:#ebebeb;"></div>
<div class="r" style="left:1296px;top:840px;width:595px;height:24px;background:#f7f7f7;border-top:1px solid #d3d3d3;border-left:1px solid #d3d3d3;border-bottom:1px solid #c9c9c9;"></div>
<div class="r" style="left:1545px;top:840px;width:2px;height:24px;background:#d3d3d3;"></div>
<div class="t" style="left:1300px;top:847.29px;font-size:11px;line-height:11px;color:#383838;letter-spacing:-0.221px;transform:scaleY(1.125);transform-origin:0 9.31px;">Exclusion allowed for the subject</div>
<svg class="r" style="left:1529px;top:849px;" width="10" height="7" viewBox="0 0 10 7"><path d="M0.6 6 L4.8 0.8 L9 6 Z" fill="#6e6e6e"/></svg>
<svg class="r" style="left:0px;top:0px;pointer-events:none;" width="1916" height="1038" viewBox="0 0 1916 1038"><path d="M720.4,386.8 H820.4 Q822.4,386.8 822.4,388.8 V408.3 Q822.4,410.3 820.4,410.3 H720.4 Q718.4,410.3 718.4,408.3 V388.8 Q718.4,386.8 720.4,386.8 Z" fill="none" stroke="#fff" stroke-width="3.2" opacity="0.55"/><path d="M720.4,386.8 H820.4 Q822.4,386.8 822.4,388.8 V408.3 Q822.4,410.3 820.4,410.3 H720.4 Q718.4,410.3 718.4,408.3 V388.8 Q718.4,386.8 720.4,386.8 Z" fill="none" stroke="#fc2d2d" stroke-width="2"/><path d="M340.5,445.9 H397.1 Q399.1,445.9 399.1,447.9 V459.3 Q399.1,461.3 397.1,461.3 H340.5 Q338.5,461.3 338.5,459.3 V447.9 Q338.5,445.9 340.5,445.9 Z" fill="none" stroke="#fff" stroke-width="3.2" opacity="0.55"/><path d="M340.5,445.9 H397.1 Q399.1,445.9 399.1,447.9 V459.3 Q399.1,461.3 397.1,461.3 H340.5 Q338.5,461.3 338.5,459.3 V447.9 Q338.5,445.9 340.5,445.9 Z" fill="none" stroke="#fc2d2d" stroke-width="2"/><path d="M357.5,540.8 H423.3 Q425.3,540.8 425.3,542.8 V554.6 Q425.3,556.6 423.3,556.6 H357.5 Q355.5,556.6 355.5,554.6 V542.8 Q355.5,540.8 357.5,540.8 Z" fill="none" stroke="#fff" stroke-width="3.2" opacity="0.55"/><path d="M357.5,540.8 H423.3 Q425.3,540.8 425.3,542.8 V554.6 Q425.3,556.6 423.3,556.6 H357.5 Q355.5,556.6 355.5,554.6 V542.8 Q355.5,540.8 357.5,540.8 Z" fill="none" stroke="#fc2d2d" stroke-width="2"/><path d="M378.2,560.1 H445.1 Q447.1,560.1 447.1,562.1 V573 Q447.1,575 445.1,575 H378.2 Q376.2,575 376.2,573 V562.1 Q376.2,560.1 378.2,560.1 Z" fill="none" stroke="#fff" stroke-width="3.2" opacity="0.55"/><path d="M378.2,560.1 H445.1 Q447.1,560.1 447.1,562.1 V573 Q447.1,575 445.1,575 H378.2 Q376.2,575 376.2,573 V562.1 Q376.2,560.1 378.2,560.1 Z" fill="none" stroke="#fc2d2d" stroke-width="2"/><path d="M710.8,174.4 H768.3000000000001 Q771.8000000000001,174.4 771.8000000000001,177.9 V192.9 Q771.8000000000001,196.4 768.3000000000001,196.4 H749 L745.9,244 L744.5,196.4 H710.8 Q707.3,196.4 707.3,192.9 V177.9 Q707.3,174.4 710.8,174.4 Z" fill="none" stroke="#fff" stroke-width="3.2" stroke-linejoin="round" opacity="0.55"/><path d="M710.8,174.4 H768.3000000000001 Q771.8000000000001,174.4 771.8000000000001,177.9 V192.9 Q771.8000000000001,196.4 768.3000000000001,196.4 H710.8 Q707.3,196.4 707.3,192.9 V177.9 Q707.3,174.4 710.8,174.4 Z" fill="#f8f8f8"/><path d="M710.8,174.4 H768.3000000000001 Q771.8000000000001,174.4 771.8000000000001,177.9 V192.9 Q771.8000000000001,196.4 768.3000000000001,196.4 H749 L745.9,244 L744.5,196.4 H710.8 Q707.3,196.4 707.3,192.9 V177.9 Q707.3,174.4 710.8,174.4 Z" fill="none" stroke="#fc2d2d" stroke-width="2" stroke-linejoin="round"/><path d="M972.0,196.3 H1044.1999999999998 Q1047.6999999999998,196.3 1047.6999999999998,199.8 V219.79999999999998 Q1047.6999999999998,223.29999999999998 1044.1999999999998,223.29999999999998 H1003.6 L946.3,244.3 L980.3,223.29999999999998 H972.0 Q968.5,223.29999999999998 968.5,219.79999999999998 V199.8 Q968.5,196.3 972.0,196.3 Z" fill="none" stroke="#fff" stroke-width="3.2" stroke-linejoin="round" opacity="0.55"/><path d="M972.0,196.3 H1044.1999999999998 Q1047.6999999999998,196.3 1047.6999999999998,199.8 V219.79999999999998 Q1047.6999999999998,223.29999999999998 1044.1999999999998,223.29999999999998 H972.0 Q968.5,223.29999999999998 968.5,219.79999999999998 V199.8 Q968.5,196.3 972.0,196.3 Z" fill="#f8f8f8"/><path d="M972.0,196.3 H1044.1999999999998 Q1047.6999999999998,196.3 1047.6999999999998,199.8 V219.79999999999998 Q1047.6999999999998,223.29999999999998 1044.1999999999998,223.29999999999998 H1003.6 L946.3,244.3 L980.3,223.29999999999998 H972.0 Q968.5,223.29999999999998 968.5,219.79999999999998 V199.8 Q968.5,196.3 972.0,196.3 Z" fill="none" stroke="#fc2d2d" stroke-width="2" stroke-linejoin="round"/><path d="M1283.8000000000002,196.3 H1363.5 Q1367.0,196.3 1367.0,199.8 V219.2 Q1367.0,222.7 1363.5,222.7 H1336 L1343.3,244.6 L1330.5,222.7 H1283.8000000000002 Q1280.3000000000002,222.7 1280.3000000000002,219.2 V199.8 Q1280.3000000000002,196.3 1283.8000000000002,196.3 Z" fill="none" stroke="#fff" stroke-width="3.2" stroke-linejoin="round" opacity="0.55"/><path d="M1283.8000000000002,196.3 H1363.5 Q1367.0,196.3 1367.0,199.8 V219.2 Q1367.0,222.7 1363.5,222.7 H1283.8000000000002 Q1280.3000000000002,222.7 1280.3000000000002,219.2 V199.8 Q1280.3000000000002,196.3 1283.8000000000002,196.3 Z" fill="#f8f8f8"/><path d="M1283.8000000000002,196.3 H1363.5 Q1367.0,196.3 1367.0,199.8 V219.2 Q1367.0,222.7 1363.5,222.7 H1336 L1343.3,244.6 L1330.5,222.7 H1283.8000000000002 Q1280.3000000000002,222.7 1280.3000000000002,219.2 V199.8 Q1280.3000000000002,196.3 1283.8000000000002,196.3 Z" fill="none" stroke="#fc2d2d" stroke-width="2" stroke-linejoin="round"/><path d="M629.6999999999999,364.4 H685.1 Q688.6,364.4 688.6,367.9 V381.0 Q688.6,384.5 685.1,384.5 H679.5 L717.7,397.6 L662,384.5 H629.6999999999999 Q626.1999999999999,384.5 626.1999999999999,381.0 V367.9 Q626.1999999999999,364.4 629.6999999999999,364.4 Z" fill="none" stroke="#fff" stroke-width="3.2" stroke-linejoin="round" opacity="0.55"/><path d="M629.6999999999999,364.4 H685.1 Q688.6,364.4 688.6,367.9 V381.0 Q688.6,384.5 685.1,384.5 H629.6999999999999 Q626.1999999999999,384.5 626.1999999999999,381.0 V367.9 Q626.1999999999999,364.4 629.6999999999999,364.4 Z" fill="#f8f8f8"/><path d="M629.6999999999999,364.4 H685.1 Q688.6,364.4 688.6,367.9 V381.0 Q688.6,384.5 685.1,384.5 H679.5 L717.7,397.6 L662,384.5 H629.6999999999999 Q626.1999999999999,384.5 626.1999999999999,381.0 V367.9 Q626.1999999999999,364.4 629.6999999999999,364.4 Z" fill="none" stroke="#fc2d2d" stroke-width="2" stroke-linejoin="round"/><path d="M454.2,440.59999999999997 H515.1 Q518.6,440.59999999999997 518.6,444.09999999999997 V462.8 Q518.6,466.3 515.1,466.3 H454.2 Q450.7,466.3 450.7,462.8 V451.2 L398.4,453.3 L450.7,442.3 V444.09999999999997 Q450.7,440.59999999999997 454.2,440.59999999999997 Z" fill="none" stroke="#fff" stroke-width="3.2" stroke-linejoin="round" opacity="0.55"/><path d="M454.2,440.59999999999997 H515.1 Q518.6,440.59999999999997 518.6,444.09999999999997 V462.8 Q518.6,466.3 515.1,466.3 H454.2 Q450.7,466.3 450.7,462.8 V444.09999999999997 Q450.7,440.59999999999997 454.2,440.59999999999997 Z" fill="#f8f8f8"/><path d="M454.2,440.59999999999997 H515.1 Q518.6,440.59999999999997 518.6,444.09999999999997 V462.8 Q518.6,466.3 515.1,466.3 H454.2 Q450.7,466.3 450.7,462.8 V451.2 L398.4,453.3 L450.7,442.3 V444.09999999999997 Q450.7,440.59999999999997 454.2,440.59999999999997 Z" fill="none" stroke="#fc2d2d" stroke-width="2" stroke-linejoin="round"/><path d="M477.2,511.4 H541.9 Q545.4,511.4 545.4,514.9 V534.0 Q545.4,537.5 541.9,537.5 H477.2 Q473.7,537.5 473.7,534.0 V534.6 L425.1,549 L473.7,526 V514.9 Q473.7,511.4 477.2,511.4 Z" fill="none" stroke="#fff" stroke-width="3.2" stroke-linejoin="round" opacity="0.55"/><path d="M477.2,511.4 H541.9 Q545.4,511.4 545.4,514.9 V534.0 Q545.4,537.5 541.9,537.5 H477.2 Q473.7,537.5 473.7,534.0 V514.9 Q473.7,511.4 477.2,511.4 Z" fill="#f8f8f8"/><path d="M477.2,511.4 H541.9 Q545.4,511.4 545.4,514.9 V534.0 Q545.4,537.5 541.9,537.5 H477.2 Q473.7,537.5 473.7,534.0 V534.6 L425.1,549 L473.7,526 V514.9 Q473.7,511.4 477.2,511.4 Z" fill="none" stroke="#fc2d2d" stroke-width="2" stroke-linejoin="round"/><path d="M508.0,573.8 H572.1 Q575.6,573.8 575.6,577.3 V593.3000000000001 Q575.6,596.8000000000001 572.1,596.8000000000001 H508.0 Q504.5,596.8000000000001 504.5,593.3000000000001 V583.4 L448.1,567.3 L504.5,576 V577.3 Q504.5,573.8 508.0,573.8 Z" fill="none" stroke="#fff" stroke-width="3.2" stroke-linejoin="round" opacity="0.55"/><path d="M508.0,573.8 H572.1 Q575.6,573.8 575.6,577.3 V593.3000000000001 Q575.6,596.8000000000001 572.1,596.8000000000001 H508.0 Q504.5,596.8000000000001 504.5,593.3000000000001 V577.3 Q504.5,573.8 508.0,573.8 Z" fill="#f8f8f8"/><path d="M508.0,573.8 H572.1 Q575.6,573.8 575.6,577.3 V593.3000000000001 Q575.6,596.8000000000001 572.1,596.8000000000001 H508.0 Q504.5,596.8000000000001 504.5,593.3000000000001 V583.4 L448.1,567.3 L504.5,576 V577.3 Q504.5,573.8 508.0,573.8 Z" fill="none" stroke="#fc2d2d" stroke-width="2" stroke-linejoin="round"/></svg>
<div class="t" style="left:238.39999999999998px;width:1000px;text-align:center;top:177.36px;font-size:16px;line-height:16px;color:#fc2d2d;font-weight:700;">cgrcod</div>
<div class="t" style="left:507.20000000000005px;width:1000px;text-align:center;top:202.06px;font-size:16px;line-height:16px;color:#fc2d2d;font-weight:700;">Subject</div>
<div class="t" style="left:822.2px;width:1000px;text-align:center;top:201.26px;font-size:16px;line-height:16px;color:#fc2d2d;font-weight:700;">Order</div>
<div class="t" style="left:156.14999999999998px;width:1000px;text-align:center;top:366.26px;font-size:16px;line-height:16px;color:#fc2d2d;font-weight:700;">idtcod</div>
<div class="t" style="left:-16.850000000000023px;width:1000px;text-align:center;top:444.86px;font-size:16px;line-height:16px;color:#fc2d2d;font-weight:700;">Level 1</div>
<div class="t" style="left:8.699999999999989px;width:1000px;text-align:center;top:516.36px;font-size:16px;line-height:16px;color:#fc2d2d;font-weight:700;">Level 2</div>
<div class="t" style="left:38.799999999999955px;width:1000px;text-align:center;top:577.26px;font-size:16px;line-height:16px;color:#fc2d2d;font-weight:700;">Level 3</div>
</body></html>
